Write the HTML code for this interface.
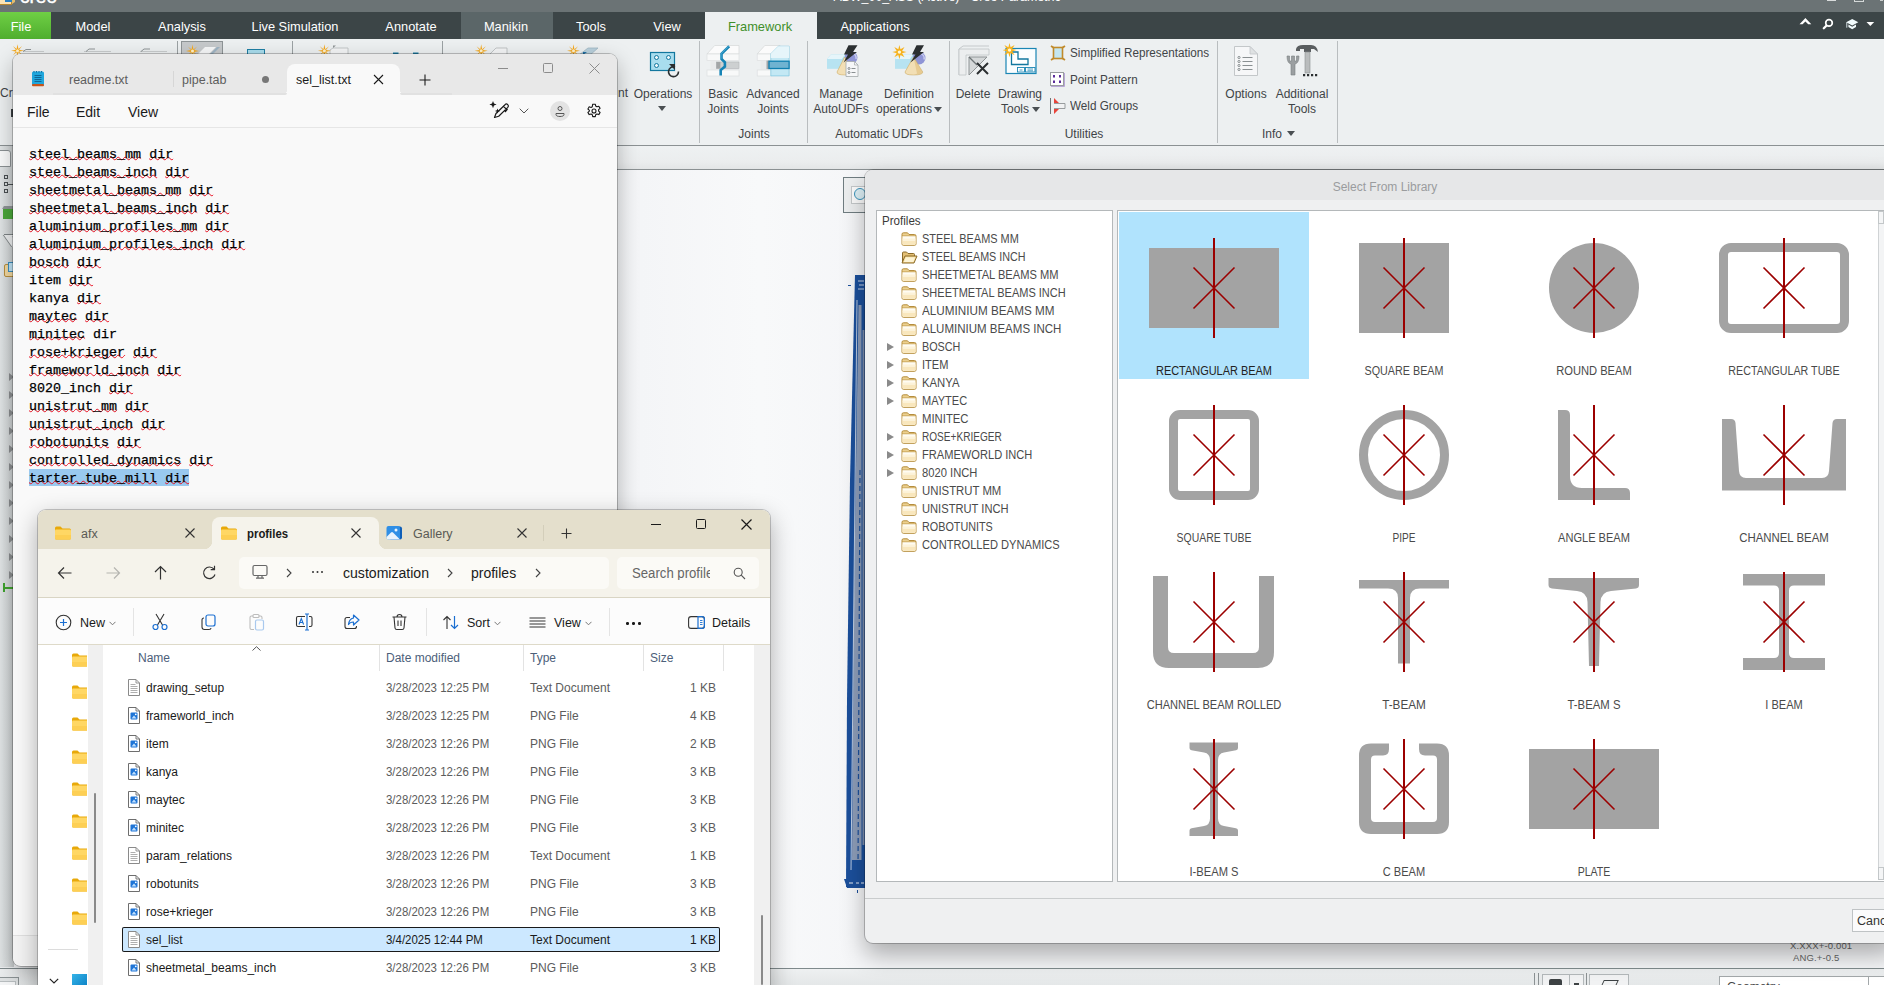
<!DOCTYPE html>
<html lang="en"><head><meta charset="utf-8"><title>Creo Parametric</title>
<style>
*{box-sizing:border-box}
html,body{margin:0;padding:0;width:1884px;height:985px;overflow:hidden;background:#f6f7f8;font-family:"Liberation Sans",sans-serif;}
.abs{position:absolute}
.t{position:absolute;white-space:nowrap;line-height:1}
.c{transform:translateX(-50%)}
/* ---------- CREO ---------- */
#creo{position:absolute;left:0;top:0;width:1884px;height:985px;overflow:hidden;background:#f7f8f9}
#ctitle{position:absolute;left:0;top:0;width:1884px;height:12px;background:#6b7375}
#cmenu{position:absolute;left:0;top:12px;width:1884px;height:27px;background:#3c4547}
#cmenu .t{color:#fff;font-size:13.5px;top:7.500px}
#cmenu .t.c{transform:translateX(-50%) scaleX(.95)}
#cribbon{position:absolute;left:0;top:39px;width:1884px;height:106px;background:#edf0f1}
#cribbon .t{color:#3f4447;font-size:12px}
#cribbon .sep{position:absolute;top:2px;width:1px;height:102px;background:#b9bdbf}
#cstrip{position:absolute;left:0;top:145px;width:1884px;height:24px;background:linear-gradient(#eef1f2,#ebedee 70%,#e3e5e6);border-top:1px solid #8b9193;}
#cgfx{position:absolute;left:0;top:169px;width:1884px;height:799px;background:linear-gradient(90deg,#eef0f2 600px,#f4f5f7 640px,#f8f9fa 760px,#f5f6f8 860px);border-top:1px solid #8b9193}
#cstatus{position:absolute;left:0;top:968px;width:1884px;height:17px;background:linear-gradient(#eef0f1,#e4e7e8);border-top:1px solid #7f8a8c;overflow:hidden}
/* ---------- NOTEPAD ---------- */
#notepad{position:absolute;left:13px;top:54px;width:604px;height:912px;background:#f9f9f9;border-radius:8px;box-shadow:0 0 0 1px rgba(0,0,0,.22),0 8px 22px rgba(0,0,0,.28);overflow:hidden}
#ntitle{position:absolute;left:0;top:0;width:604px;height:41px;background:#e8e8e8}
#nmenu{position:absolute;left:0;top:41px;width:604px;height:33px;background:#f9f9f9;border-bottom:1px solid #e6e6e6}
#nmenu .t{font-size:14px;color:#1a1a1a}
#ntext{z-index:0;position:absolute;left:0;top:74px;width:604px;height:800px;padding:18px 0 0 16px;font-family:"Liberation Mono",monospace;font-size:13.35px;color:#000;-webkit-text-stroke:.25px #000;}
#ntext .ln{height:18px;line-height:18px;white-space:pre}
#ntext u{text-decoration:underline wavy #e81123;text-decoration-thickness:1.2px;text-underline-offset:-1.5px;text-decoration-skip-ink:none}
#ntext .sel{position:relative;display:inline-block;height:18px}
#ntext .sel::before{content:"";position:absolute;left:0;right:0;top:-1.5px;height:17px;background:#99c9ef;z-index:-1}
#nstatus{position:absolute;left:0;top:881px;width:604px;height:30px;background:#f3f3f3;border-top:1px solid #e0e0e0}
/* ---------- DIALOG ---------- */
#dialog{position:absolute;left:865px;top:170px;width:1030px;height:773px;background:#eff0f1;border-radius:8px 0 0 8px;box-shadow:0 0 0 1px rgba(0,0,0,.22),0 12px 24px rgba(0,0,0,.30);overflow:hidden}
#dtitle{position:absolute;left:0;top:0;width:1030px;height:30px;background:#e6e7e8}
#dtree{position:absolute;left:11px;top:40px;width:237px;height:672px;background:#fff;border:1px solid #b4b8ba}
#dgrid{position:absolute;left:252px;top:40px;width:768px;height:672px;background:#fff;border:1px solid #b4b8ba;overflow:hidden}
.tr{position:absolute;left:0;height:18px;width:236px;font-size:12px;color:#4a4a4a;margin-top:.5px;line-height:18px;white-space:nowrap}
.tr span{position:absolute;left:45px;top:0;transform:scaleX(.918);transform-origin:0 50%}
.tr .fi{position:absolute;left:24px;top:2px}
.tr .ar{position:absolute;left:10px;top:5.500px;border:4.500px solid transparent;border-left:7px solid #8a8a8a;border-right:0}
.cell{position:absolute;width:190px;height:167px}
.cell.sel{background:#b0e3fd}
.cell svg{position:absolute;left:0;top:0}
.cell .lb{position:absolute;left:0;top:153px;width:190px;text-align:center;font-size:12px;line-height:12px;color:#4a4a4a;white-space:nowrap;transform:scaleX(.912)}
.cell.sel .lb{color:#222}
/* ---------- EXPLORER ---------- */
#explorer{position:absolute;left:38px;top:510px;width:732px;height:490px;background:#fff;border-radius:8px 8px 0 0;box-shadow:0 0 0 1px rgba(0,0,0,.2),0 8px 24px rgba(0,0,0,.32);overflow:hidden}
#etabs{position:absolute;left:0;top:0;width:732px;height:39px;background:#e4dfcc}
#eaddr{position:absolute;left:0;top:39px;width:732px;height:49px;background:#f5f3eb;border-bottom:1px solid #d9d5c4}
#etool{position:absolute;left:0;top:88px;width:732px;height:47px;background:#fcfcfc;border-bottom:1px solid #dedac9}
#ebody{position:absolute;left:0;top:135px;width:732px;height:355px;background:#fff}
#enav{position:absolute;left:0;top:0;width:65px;height:355px;background:#fff}
#ehead{position:absolute;left:84px;top:0;width:640px;height:26px}
#ehead .t{font-size:12px;color:#4c607a}
#ehead i{position:absolute;top:0;width:1px;height:26px;background:#e3e3e3}
.fr{position:absolute;left:84px;width:598px;height:28px;font-size:12px;color:#1a1a1a;white-space:nowrap;line-height:28px}
.fr.sel{background:#cce8ff;box-shadow:inset 0 0 0 1px #1a1a1a;border-radius:2px;margin-top:1.5px;height:25px;line-height:26.5px}
.fr.sel .ic{top:3.5px}
.fr .ic{position:absolute;left:5px;top:5px}

.fr span{position:absolute;top:0}
.fr .n{left:24px}.fr .d{left:264px;color:#5c5c5c;transform:scaleX(.955);transform-origin:0 50%}.fr .ty{left:408px;color:#5c5c5c}.fr .sz{right:4px;color:#5c5c5c}
.fr.sel span{color:#1a1a1a}
</style></head><body>
<div id="creo">
 <div id="ctitle">
  <div class="t" style="left:20px;top:-13.500px;font-size:19px;color:#fff;-webkit-text-stroke:.4px #fff">creo</div>
  <div class="abs" style="left:0;top:0;width:12px;height:5px;background:#fbe4b4;border:1px solid #b8862e;border-top:0;border-left:0"></div><div class="abs" style="left:12px;top:0;width:3px;height:4px;background:#e3bd6e;transform:skewY(-35deg);transform-origin:0 100%"></div><div class="abs" style="left:5px;top:0;width:7px;height:1.500px;background:#2a7fc0"></div>
  <div class="t c" style="left:947px;top:-8.600px;font-size:12.400px;color:#fff">ABW_00_ASS (Active) - Creo Parametric</div>
  <div class="abs" style="left:1827px;top:0;width:9px;height:1px;background:#d9dcdc"></div>
  <div class="abs" style="left:1854px;top:-6px;width:10px;height:8px;border:1px solid #d4d8d8"></div><div class="abs" style="left:1880px;top:0;width:3px;height:1px;background:#c9cdcd"></div>
 </div>
 <div id="cmenu">
  <div class="abs" style="left:0;top:0;width:51px;height:27px;background:linear-gradient(180deg,#6fcf45,#4fae2e)"></div>
  <div class="abs" style="left:461px;top:0;width:92px;height:27px;background:#5b6668"></div>
  <div class="abs" style="left:705px;top:0;width:112px;height:27px;background:#edf0f1"></div>
  <div class="t c" style="left:21px">File</div>
  <div class="t c" style="left:93px">Model</div>
  <div class="t c" style="left:182px">Analysis</div>
  <div class="t c" style="left:295px">Live Simulation</div>
  <div class="t c" style="left:411px">Annotate</div>
  <div class="t c" style="left:506px">Manikin</div>
  <div class="t c" style="left:591px">Tools</div>
  <div class="t c" style="left:667px">View</div>
  <div class="t c" style="left:760px;color:#3f8f2a">Framework</div>
  <div class="t c" style="left:875px">Applications</div>
  <svg class="abs" style="left:1798px;top:4px" width="80" height="20" viewBox="0 0 80 20">
   <path d="M1.500 8.300 L7.400 2.100 L13.300 8.300 H10.200 L7.400 5.500 L4.600 8.300Z" fill="#fff"/>
   <circle cx="31" cy="6.900" r="3.300" fill="none" stroke="#fff" stroke-width="1.700"/><path d="M28.300 9.700 L25.800 12.200" stroke="#fff" stroke-width="2.300" stroke-linecap="round"/>
   <g transform="translate(-2 0)"><path d="M50.200 6.300 L56.200 3.100 L62.300 6.300 L56.200 9.500Z M52.400 8.500 V11.100 L56.200 13.300 L60 11.100 V8.500 L56.200 10.800Z" fill="#f2fbfd"/><path d="M50.800 6.300 V11.700" stroke="#e6f3f6" stroke-width=".9"/></g>
   <path d="M68.500 6 H76.200 L72.350 10.100Z" fill="#fff"/>
  </svg>
 </div>
 <div id="cribbon">
  <!-- icons peeking above notepad -->
  <svg class="abs" style="left:0;top:0" width="640" height="16" viewBox="0 0 640 16">
   <g stroke="#c9cccd" stroke-width="1" fill="none"><path d="M23 12.500H44M84 12.500H111M140 12.500H167"/><path d="M23 12.500l3 -2h5M86 12.500l3 -2.500h6M141 12.500l3 -2.500h6" stroke="#8e9496"/></g>
   <g stroke="#9ba1a3" stroke-width="1" fill="none"><path d="M177.500 2v14M292.500 2v14M442.500 2v14"/></g>
   <rect x="181.500" y="2.500" width="41" height="14" fill="#c6c9cb" stroke="#8e9496"/><path d="M197 16 L205 8 H216 L208 16Z" fill="#f6f7f8"/><path d="M209 16 L217 8 H220 L212 16Z" fill="#9eb4c4"/>
   <rect x="247.500" y="10.500" width="17" height="8" fill="#a9ddee" stroke="#1f7fa5"/>
   <path d="M330 15.500 V11 l3 -2 h15 v6.500" fill="#f4f5f6" stroke="#b9bdbf" stroke-width=".8"/><path d="M333 9 l3 -2.500 h-3z" fill="#8e9496"/>
   <path d="M393 13.500h5.500v3h-5.500zM413 13.500h5.500v3h-5.500z" fill="#1f7fa5"/>
   <path d="M489 16 l7 -7 h11 v7z" fill="#f4f5f6" stroke="#b5b9bb" stroke-width=".8"/>
   <path d="M579 16 l9 -7 h10 l-8 7z" fill="#b9d0dc" stroke="#9fb7c4" stroke-width=".8"/><path d="M583 16 l4 -3 h-4z" fill="#1f6fa5"/>
   <g transform="translate(17.5 11.7)"><path d="M0 -6.5 L.9 -1.6 L4.6 -4.6 L1.6 -.9 L6.5 0 L1.6 .9 L4.6 4.6 L.9 1.6 L0 6.5 L-.9 1.6 L-4.6 4.6 L-1.6 .9 L-6.5 0 L-1.6 -.9 L-4.6 -4.6 L-.9 -1.6Z" fill="#f5a81c"/><circle r="1.500" fill="#fff3cf"/></g><g transform="translate(192.5 12)"><path d="M0 -6.5 L.9 -1.6 L4.6 -4.6 L1.6 -.9 L6.5 0 L1.6 .9 L4.6 4.6 L.9 1.6 L0 6.5 L-.9 1.6 L-4.6 4.6 L-1.6 .9 L-6.5 0 L-1.6 -.9 L-4.6 -4.6 L-.9 -1.6Z" fill="#f5a81c"/><circle r="1.500" fill="#fff3cf"/></g><g transform="translate(324.4 11.8)"><path d="M0 -6.5 L.9 -1.6 L4.6 -4.6 L1.6 -.9 L6.5 0 L1.6 .9 L4.6 4.6 L.9 1.6 L0 6.5 L-.9 1.6 L-4.6 4.6 L-1.6 .9 L-6.5 0 L-1.6 -.9 L-4.6 -4.6 L-.9 -1.6Z" fill="#f5a81c"/><circle r="1.500" fill="#fff3cf"/></g><g transform="translate(481.2 11.8)"><path d="M0 -6.5 L.9 -1.6 L4.6 -4.6 L1.6 -.9 L6.5 0 L1.6 .9 L4.6 4.6 L.9 1.6 L0 6.5 L-.9 1.6 L-4.6 4.6 L-1.6 .9 L-6.5 0 L-1.6 -.9 L-4.6 -4.6 L-.9 -1.6Z" fill="#f5a81c"/><circle r="1.500" fill="#fff3cf"/></g><g transform="translate(573.5 11.8)"><path d="M0 -6.5 L.9 -1.6 L4.6 -4.6 L1.6 -.9 L6.5 0 L1.6 .9 L4.6 4.6 L.9 1.6 L0 6.5 L-.9 1.6 L-4.6 4.6 L-1.6 .9 L-6.5 0 L-1.6 -.9 L-4.6 -4.6 L-.9 -1.6Z" fill="#f5a81c"/><circle r="1.500" fill="#fff3cf"/></g>
  </svg>
  <div class="t" style="left:0;top:48px">Cr</div>
  <div class="abs" style="left:11px;top:70px;width:2px;height:8px;background:#3a3f42"></div>
  <div class="t" style="left:618px;top:48px">nt</div>
  <div class="sep" style="left:699px"></div><div class="sep" style="left:807px"></div><div class="sep" style="left:949px"></div><div class="sep" style="left:1217px"></div><div class="sep" style="left:1337px"></div>
  <!-- Operations -->
  <svg class="abs" style="left:648px;top:11px" width="34" height="30" viewBox="0 0 34 30">
   <rect x="2.500" y="2.500" width="24" height="18" fill="#a9ddee" stroke="#12779e" stroke-width="1.200"/>
   <g fill="#eef7fa" stroke="#12779e"><circle cx="8.500" cy="7.500" r="2"/><circle cx="20.500" cy="7.500" r="2"/><circle cx="8.500" cy="15.500" r="2"/></g>
   <path d="M21 14h6v6z" fill="#2a2f31"/><path d="M30.500 21.500a5 5 0 1 1 -3.500 -4.600" fill="none" stroke="#2a2f31" stroke-width="1.600"/>
  </svg>
  <div class="t c" style="left:663px;top:49px">Operations</div>
  <div class="abs" style="left:658px;top:67px;border:4px solid transparent;border-top:5px solid #4a4f52;border-bottom:0"></div>
  <!-- Joints -->
  <svg class="abs" style="left:706px;top:5px" width="36" height="34" viewBox="0 0 36 34">
   <path d="M1 10 L8.700 1.500 H33 V10Z" fill="#fbfbfb" stroke="#d5d8d9" stroke-width=".7"/>
   <rect x="1" y="10" width="32" height="6.600" fill="#f8f9f9" stroke="#dcdfe0" stroke-width=".7"/>
   <rect x="4.500" y="16.600" width="28.500" height="9.400" fill="#e9ebec"/>
   <rect x="10.400" y="18" width="22.600" height="6.500" fill="#cdd0d1" stroke="#b1b5b7" stroke-width=".6"/><rect x="10.400" y="18" width="4" height="6.500" fill="#a3a6a7"/>
   <rect x="1" y="26" width="32" height="6" fill="#f8f9f9" stroke="#dcdfe0" stroke-width=".7"/>
   <path d="M23.200 2.200 L15.500 9.800 V14.900 L18.900 18.300 V22.600 L14.700 26 V31.600" fill="none" stroke="#1583b5" stroke-width="2.600" stroke-linejoin="miter"/>
   <path d="M22.600 2.200 L15 9.800 V14.900" fill="none" stroke="#5bb8dd" stroke-width=".8"/>
  </svg>
  <svg class="abs" style="left:756px;top:5px" width="36" height="34" viewBox="0 0 36 34">
   <path d="M1.200 10 L8.800 1.500 H24 V10Z" fill="#fbfbfb" stroke="#d5d8d9" stroke-width=".7"/>
   <rect x="1.200" y="10" width="14" height="6.600" fill="#f8f9f9" stroke="#dcdfe0" stroke-width=".7"/>
   <rect x="4.500" y="16.600" width="11" height="9.400" fill="#e9ebec"/>
   <rect x="1.200" y="26" width="14" height="6" fill="#f8f9f9" stroke="#dcdfe0" stroke-width=".7"/>
   <path d="M22.400 2.200 H33.100 V31.900 H14.800 V9.800Z" fill="#c3e8f4" stroke="#7cc4de" stroke-width=".7"/><path d="M22.400 2.200 H33.100 V14 H14.800 V9.800Z" fill="#e6f5fa"/>
   <rect x="10.500" y="16.600" width="3" height="8.500" fill="#a3a6a7"/>
   <rect x="13" y="17.200" width="20.100" height="7.300" fill="#6fb3d1" stroke="#0f7fb0" stroke-width="1.300"/>
  </svg>
  <div class="t c" style="left:723px;top:49px">Basic</div><div class="t c" style="left:723px;top:63.700px">Joints</div>
  <div class="t c" style="left:773px;top:49px">Advanced</div><div class="t c" style="left:773px;top:63.700px">Joints</div>
  <div class="t c" style="left:754px;top:89px">Joints</div>
  <!-- Automatic UDFs -->
  <svg class="abs" style="left:826px;top:5px" width="34" height="36" viewBox="0 0 34 36">
   <circle cx="25" cy="13.500" r="6.500" fill="#8f95d6"/><path d="M26 9 a5 5 0 0 1 4 6" stroke="#c9ccee" stroke-width="1.500" fill="none"/>
   <path d="M1 15 L5 10.500 H19 V24.500 H1Z" fill="#a9ddee"/><path d="M1 15 L5 10.500 H19 L16 15Z" fill="#e6f5fa"/><path d="M1 15 H16 V24.500 H1Z" fill="#b7e3f1"/>
   <path d="M18.700 13 L26.500 28 Q26.500 31 18.700 31 Q11 31 11 28Z" fill="#e7cb92"/><path d="M18.700 13 L22 29.500 Q20 31 18.700 31 Q11 31 11 28Z" fill="#f2dfb5"/><path d="M18.700 13 L26.500 28 Q26.500 31 18.700 31 Q11 31 11 28Z" fill="none" stroke="#c9a862" stroke-width=".5"/>
   <path d="M22.500 1.300 H31.500 L27 8 H31 L17.500 18.500 L22 10.500 H18Z" fill="#2b2f31"/>
   <path d="M20 17.500 H28.500 L32 21 V32.500 H20Z" fill="#f6f7f8" stroke="#a3a8aa" stroke-width=".8"/><path d="M28.500 17.500 V21 H32" fill="none" stroke="#a3a8aa" stroke-width=".7"/><g stroke="#6f7577" stroke-width=".8" fill="none"><circle cx="23" cy="24.500" r="1"/><circle cx="23" cy="28.500" r="1"/><path d="M25.500 24.500h4M25.500 28.500h4"/></g>
  </svg>
  <svg class="abs" style="left:892px;top:5px" width="34" height="36" viewBox="0 0 34 36">
   <circle cx="27" cy="14" r="6.500" fill="#8f95d6"/><path d="M28.500 9.500 a5 5 0 0 1 3.500 6" stroke="#c9ccee" stroke-width="1.500" fill="none"/>
   <path d="M3 15 L7 10.500 H21 V24.500 H3Z" fill="#a9ddee"/><path d="M3 15 L7 10.500 H21 L18 15Z" fill="#e6f5fa"/><path d="M3 15 H18 V24.500 H3Z" fill="#b7e3f1"/>
   <path d="M21.500 13 L30.800 28 Q30.800 31 21.500 31 Q13 31 13 28Z" fill="#e7cb92"/><path d="M21.500 13 L25 29.500 Q23 31 21.500 31 Q13 31 13 28Z" fill="#f2dfb5"/><path d="M21.500 13 L30.800 28 Q30.800 31 21.500 31 Q13 31 13 28Z" fill="none" stroke="#c9a862" stroke-width=".5"/>
   <path d="M24.500 1.300 H32 L28 8 H32 L18.500 18.500 L23.500 10.500 H20Z" fill="#2b2f31"/>
   <path d="M7.400 1 l1.100 4.300 l4 -2.300 l-2.400 4 l4.400 1.100 l-4.400 1.100 l2.400 4 l-4 -2.300 l-1.100 4.300 l-1.100 -4.300 l-4 2.300 l2.400 -4 l-4.400 -1.100 l4.400 -1.100 l-2.400 -4 l4 2.300z" fill="#f6b21e"/><circle cx="7.400" cy="8.100" r="1.700" fill="#fff7d6"/>
  </svg>
  <div class="t c" style="left:841px;top:49px">Manage</div><div class="t c" style="left:841px;top:63.700px">AutoUDFs</div>
  <div class="t c" style="left:909px;top:49px">Definition</div><div class="t c" style="left:904px;top:63.700px">operations</div>
  <div class="abs" style="left:934px;top:68px;border:4px solid transparent;border-top:5px solid #4a4f52;border-bottom:0"></div>
  <div class="t c" style="left:879px;top:89px">Automatic UDFs</div>
  <!-- Utilities -->
  <svg class="abs" style="left:957px;top:6px" width="34" height="34" viewBox="0 0 34 34">
   <path d="M2 30 V4 L6 1 H32" fill="none" stroke="#c5c9cb"/><path d="M2 4 H32 V10 H9 V30 H2Z" fill="#eceeef" stroke="#c0c4c6" stroke-width=".8"/>
   <path d="M12 12 H30 L12 30Z" fill="#d5d8d9" stroke="#8e9395" stroke-width="1"/><path d="M12 12 L20 20" stroke="#6f7577" stroke-width="1.200"/>
   <path d="M20 18 L31 29 M31 18 L20 29" stroke="#2b2f31" stroke-width="2"/>
  </svg>
  <svg class="abs" style="left:1003px;top:4px" width="36" height="36" viewBox="0 0 36 36">
   <rect x="3" y="5.500" width="30" height="25" fill="#fafdfe" stroke="#1a86b4" stroke-width="1.200"/>
   <path d="M8.500 9 V21.500 H25 V16 H15 V9Z" fill="#fff" stroke="#12779e" stroke-width="1.300"/>
   <rect x="14.500" y="24.500" width="7" height="4.500" fill="#fff" stroke="#1a86b4" stroke-width=".9"/><rect x="22.500" y="24.500" width="9.500" height="4.500" fill="#fff" stroke="#1a86b4" stroke-width=".9"/><path d="M16.500 27h3M24.500 26h5.500M24.500 27.800h5.500" stroke="#1a86b4" stroke-width=".8"/>
   <path d="M6.500 0 l1.100 4.300 l4 -2.300 l-2.400 4 l4.400 1.100 l-4.400 1.100 l2.400 4 l-4 -2.300 l-1.100 4.300 l-1.100 -4.300 l-4 2.300 l2.400 -4 l-4.400 -1.100 l4.400 -1.100 l-2.400 -4 l4 2.300z" fill="#f6b21e"/><circle cx="6.500" cy="7.100" r="1.700" fill="#fff7d6"/>
  </svg>
  <div class="t c" style="left:973px;top:49px">Delete</div>
  <div class="t c" style="left:1020px;top:49px">Drawing</div><div class="t c" style="left:1015px;top:63.700px">Tools</div>
  <div class="abs" style="left:1032px;top:68px;border:4px solid transparent;border-top:5px solid #4a4f52;border-bottom:0"></div>
  <svg class="abs" style="left:1050px;top:6px" width="16" height="16" viewBox="0 0 16 16"><rect x="3.500" y="2.500" width="9" height="11" fill="#c4e6f0" stroke="#c08a2a" stroke-width="1.600"/><path d="M1 1l3 2M15 1l-3 2M1 15l3 -2M15 15l-3 -2" stroke="#c08a2a" stroke-width="1.800"/></svg>
  <svg class="abs" style="left:1049px;top:32px" width="17" height="17" viewBox="0 0 17 17"><rect x="1.500" y="1.500" width="13" height="13" fill="#fff" stroke="#9a9ea0"/><path d="M15.500 2V15.500H2" stroke="#b9a7d8" fill="none"/><g fill="#5b2d9b"><rect x="4" y="4" width="2" height="2.500"/><rect x="10" y="4" width="2" height="2.500"/><rect x="4" y="9.500" width="2" height="2.500"/><rect x="10" y="9.500" width="2" height="2.500"/></g></svg>
  <svg class="abs" style="left:1049px;top:58px" width="18" height="18" viewBox="0 0 18 18"><path d="M1.500 1v16" stroke="#6f7577"/><path d="M5 1 L10 6 H5Z M5 17 L10 12 H5Z" fill="#e8443a"/><path d="M5 6.500H16V11.500H5" fill="#f1f2f3" stroke="#8e9395" stroke-width=".9"/></svg>
  <div class="t" style="left:1070px;top:8px;transform:scaleX(.975);transform-origin:0 50%">Simplified Representations</div>
  <div class="t" style="left:1070px;top:35px;transform:scaleX(.975);transform-origin:0 50%">Point Pattern</div>
  <div class="t" style="left:1070px;top:61px;transform:scaleX(.975);transform-origin:0 50%">Weld Groups</div>
  <div class="t c" style="left:1084px;top:89px">Utilities</div>
  <!-- Info -->
  <svg class="abs" style="left:1232px;top:6px" width="28" height="32" viewBox="0 0 28 32"><path d="M2.500 1.500 H18 L25.500 9 V30.500 H2.500Z" fill="#f6f7f8" stroke="#c3c7c9"/><path d="M18 1.500 V9 H25.500Z" fill="#dfe2e3" stroke="#c3c7c9" stroke-width=".8"/><g stroke="#8a9092" stroke-width="1" fill="none"><circle cx="7" cy="12.500" r="1.100"/><circle cx="7" cy="16.500" r="1.100"/><circle cx="7" cy="20.500" r="1.100"/><circle cx="7" cy="24.500" r="1.100"/><path d="M10.500 12.500h10M10.500 16.500h10M10.500 20.500h10M10.500 24.500h10"/></g></svg>
  <svg class="abs" style="left:1284px;top:4px" width="36" height="36" viewBox="0 0 36 36">
   <path d="M3 13 q0 7 4 8 V32 h4 V21 q4 -1 4 -8 h-2.500 v5 h-2 v-5 h-3 v5 h-2 v-5Z" fill="#9b9fa1" stroke="#7b8082" stroke-width=".6"/>
   <path d="M12 6 Q13 2 19 2 H27 Q33 2 34 9 L30 6 H27 V9 H20 V6 H16 V8 H12Z" fill="#5a5e60"/><rect x="21" y="9" width="5" height="21" fill="#b9bcbd" stroke="#8b8f91" stroke-width=".6"/>
   <path d="M19 31h2.200v2.200h-2.200zM23 31h2.200v2.200h-2.200zM27 31h2.200v2.200h-2.200zM31 31h2.200v2.200h-2.200z" fill="#2b2f31"/>
  </svg>
  <div class="t c" style="left:1246px;top:49px">Options</div>
  <div class="t c" style="left:1302px;top:49px">Additional</div><div class="t c" style="left:1302px;top:63.700px">Tools</div>
  <div class="t c" style="left:1272px;top:89px">Info</div>
  <div class="abs" style="left:1287px;top:92px;border:4px solid transparent;border-top:5px solid #4a4f52;border-bottom:0"></div>
 </div>
 <div id="cstrip"></div>
 <div id="cgfx">
  <div class="abs" style="left:843px;top:7px;width:40px;height:36px;border:1px solid #6f7c80;background:#eceeef"></div>
  <div class="abs" style="left:851px;top:16px;width:20px;height:18px;border:1px solid #c3c7c9;background:#fbfbfb"></div>
  <div class="abs" style="left:854px;top:18px;width:12px;height:12px;border:1.300px solid #3a93ba;border-radius:50%;background:#dceff5"></div>
  <!-- model -->
  <svg class="abs" style="left:840px;top:100px" width="26" height="630" viewBox="840 270 26 630">
   <path d="M855 275 H866 V887 H846 L847 700 L850 480Z" fill="#1b4f9b"/>
   <path d="M858.500 305 H861.500 L861.500 860 H852 L854 600Z" fill="#8d9db8"/>
   <path d="M862.500 330 H864.500 V845 H862.500Z" fill="#7f90ad"/>
   <path d="M857 300 L851 870" stroke="#e9edf4" stroke-width=".8" fill="none"/>
   <path d="M860 470 L858 870" stroke="#1b4f9b" stroke-width="1.200" stroke-dasharray="5 3" fill="none"/>
   <path d="M856 278 H866 V293 H856Z" fill="#1b4f9b"/><path d="M858 281h6M859 285h5M858 289h6" stroke="#c9d3e4" stroke-width="1"/>
   <path d="M844 879 H866 V888 H847Z" fill="#1b4f9b"/><path d="M849 883h4M856 883h3M861 883h3" stroke="#e9edf4" stroke-width="1"/>
   <path d="M848 285.500h3" stroke="#1b4f9b" stroke-width="1"/><path d="M857.500 890v3" stroke="#1b4f9b" stroke-width="1"/>
  </svg>
  <div class="t" style="left:1790px;top:771px;font-size:9.500px;color:#666;letter-spacing:.15px">X.XXX+-0.001</div>
  <div class="t" style="left:1793px;top:783px;font-size:9.500px;color:#666;letter-spacing:.15px">ANG.+-0.5</div>
 </div>
 <div id="cstatus">
  <div class="abs" style="left:-2px;top:8px;width:21px;height:12px;border:1px solid #8d9496;background:#dfe2e3"></div><div class="abs" style="left:-2px;top:12px;width:18px;height:8px;border:1px solid #b9bec0;background:#f4f5f6"></div>
  <div class="abs" style="left:1534px;top:4px;width:1px;height:15px;background:#8b9193"></div><div class="abs" style="left:1538px;top:4px;width:1px;height:15px;background:#8b9193"></div>
  <div class="abs" style="left:1542px;top:5px;width:42px;height:14px;border:1px solid #b3b8ba;background:#f1f2f3"></div>
  <div class="abs" style="left:1569px;top:5px;width:1px;height:14px;background:#b3b8ba"></div>
  <div class="abs" style="left:1549px;top:10px;width:13px;height:8px;background:#3d4244;border-radius:2px 2px 0 0"></div>
  <div class="abs" style="left:1574px;top:14px;width:5px;height:1.500px;background:#3d4244"></div>
  <div class="abs" style="left:1586px;top:4px;width:1px;height:15px;background:#8b9193"></div>
  <div class="abs" style="left:1589px;top:5px;width:40px;height:14px;border:1px solid #b3b8ba;background:#f1f2f3"></div>
  <div class="abs" style="left:1602px;top:11px;width:15px;height:8px;border:1.500px solid #3d4244;transform:skewX(-25deg)"></div>
  <div class="abs" style="left:1719px;top:7px;width:170px;height:13px;border:1px solid #a3a8aa;background:#fff"></div>
  <div class="t" style="left:1727px;top:12px;font-size:12px;color:#444">Geometry</div>
  <div class="abs" style="left:1868px;top:7px;width:1px;height:13px;background:#a3a8aa"></div>
 </div>
 <!-- left edge of creo visible left of notepad -->
 <div class="abs" style="left:0;top:146px;width:14px;height:821px;background:linear-gradient(90deg,#e1e5e6,#d6dadb 55%,#c3c7c8);overflow:hidden">
  <div class="abs" style="left:-4px;top:4px;width:15px;height:17px;background:#fafbfb;border:1px solid #8b9193;border-radius:0 3px 0 0"></div>
  <div class="abs" style="left:4px;top:29px;width:4px;height:4px;border:1px solid #4a4f52"></div><div class="abs" style="left:4px;top:36px;width:4px;height:4px;border:1px solid #4a4f52"></div><div class="abs" style="left:4px;top:43px;width:4px;height:4px;border:1px solid #4a4f52"></div><div class="abs" style="left:8px;top:38px;width:5px;height:1px;background:#4a4f52"></div>
  <div class="abs" style="left:3px;top:60px;width:11px;height:3px;background:#8e9395;transform:skewX(-30deg)"></div><div class="abs" style="left:3px;top:63px;width:11px;height:10px;background:#4aa63a"></div>
  <div class="abs" style="left:4px;top:88px;width:12px;height:1px;background:#7d8385;box-shadow:0 1px #f3f4f5"></div><div class="abs" style="left:7px;top:89px;width:8px;height:12px;border-left:1px solid #7d8385;transform:skewX(35deg);background:#eceeef"></div>
  <div class="abs" style="left:4px;top:118px;width:12px;height:13px;background:#f3d9a0;border:1px solid #b78f3e;border-radius:2px"></div><div class="abs" style="left:8px;top:116px;width:8px;height:10px;background:#bfe3f5;border:1px solid #3a8fc0"></div>
  <div class="abs" style="left:9px;top:227px;border:4.500px solid transparent;border-left:5px solid #8a8d8f;border-right:0"></div><div class="abs" style="left:9px;top:245px;border:4.500px solid transparent;border-left:5px solid #8a8d8f;border-right:0"></div><div class="abs" style="left:9px;top:263px;border:4.500px solid transparent;border-left:5px solid #8a8d8f;border-right:0"></div><div class="abs" style="left:9px;top:281px;border:4.500px solid transparent;border-left:5px solid #8a8d8f;border-right:0"></div><div class="abs" style="left:9px;top:299px;border:4.500px solid transparent;border-left:5px solid #8a8d8f;border-right:0"></div><div class="abs" style="left:9px;top:317px;border:4.500px solid transparent;border-left:5px solid #8a8d8f;border-right:0"></div><div class="abs" style="left:9px;top:335px;border:4.500px solid transparent;border-left:5px solid #8a8d8f;border-right:0"></div><div class="abs" style="left:9px;top:353px;border:4.500px solid transparent;border-left:5px solid #8a8d8f;border-right:0"></div><div class="abs" style="left:9px;top:371px;border:4.500px solid transparent;border-left:5px solid #8a8d8f;border-right:0"></div><div class="abs" style="left:9px;top:389px;border:4.500px solid transparent;border-left:5px solid #8a8d8f;border-right:0"></div><div class="abs" style="left:9px;top:407px;border:4.500px solid transparent;border-left:5px solid #8a8d8f;border-right:0"></div><div class="abs" style="left:9px;top:425px;border:4.500px solid transparent;border-left:5px solid #8a8d8f;border-right:0"></div>
  <div class="abs" style="left:3px;top:441px;width:11px;height:1.500px;background:#3fa32e"></div><div class="abs" style="left:3px;top:437px;width:1.500px;height:9px;background:#3fa32e"></div>
 </div>
</div>
<div id="notepad">
 <div id="ntitle">
  <svg class="abs" style="left:18px;top:16px" width="14" height="17" viewBox="0 0 14 17"><rect x="1" y="1.500" width="12" height="14" rx="1.500" fill="#1fa6dc"/><rect x="1" y="14" width="12" height="2.200" rx="1" fill="#c7541a"/><path d="M3 1v1.500M5.500 1v1.500M8 1v1.500M10.500 1v1.500" stroke="#0c6fa3" stroke-width="1"/><path d="M3.500 5.500h7M3.500 7.500h7M3.500 9.500h7M3.500 11.500h7" stroke="#0d5d8c" stroke-width=".9"/></svg>
  <div class="t" style="left:56px;top:20px;font-size:12.500px;color:#5d5d5d">readme.txt</div>
  <div class="abs" style="left:160px;top:17px;width:1px;height:16px;background:#d6d6d6"></div>
  <div class="t" style="left:169px;top:20px;font-size:12.500px;color:#5d5d5d">pipe.tab</div>
  <div class="abs" style="left:249px;top:22px;width:7px;height:7px;border-radius:50%;background:#777"></div>
  <div class="abs" style="left:274px;top:10px;width:113px;height:31px;background:#f9f9f9;border-radius:8px 8px 0 0"></div>
  <div class="abs" style="left:268px;top:35px;width:6px;height:6px;background:radial-gradient(circle at 0 0,transparent 6px,#f9f9f9 6.500px)"></div>
  <div class="abs" style="left:387px;top:35px;width:6px;height:6px;background:radial-gradient(circle at 100% 0,transparent 6px,#f9f9f9 6.500px)"></div>
  <div class="abs" style="left:40px;top:39px;width:234px;height:2px;background:#e1e1e1;border-radius:0 0 6px 0"></div>
  <div class="abs" style="left:387px;top:39px;width:52px;height:2px;background:#e1e1e1;border-radius:0 0 0 6px"></div>
  <div class="t" style="left:283px;top:20px;font-size:12.500px;color:#1a1a1a">sel_list.txt</div>
  <svg class="abs" style="left:360px;top:20px" width="11" height="11" viewBox="0 0 11 11"><path d="M1 1L10 10M10 1L1 10" stroke="#1a1a1a" stroke-width="1.100"/></svg>
  <svg class="abs" style="left:406px;top:20px" width="12" height="12" viewBox="0 0 12 12"><path d="M6 .500V11.500M.500 6H11.500" stroke="#1a1a1a" stroke-width="1.100"/></svg>
  <div class="abs" style="left:485px;top:14px;width:10px;height:1px;background:#8c8c8c"></div>
  <div class="abs" style="left:530px;top:9px;width:10px;height:10px;border:1px solid #8c8c8c;border-radius:1.500px"></div>
  <svg class="abs" style="left:576px;top:9px" width="11" height="11" viewBox="0 0 11 11"><path d="M.500 .500L10.500 10.500M10.500 .500L.500 10.500" stroke="#8c8c8c" stroke-width="1"/></svg>
 </div>
 <div id="nmenu">
  <div class="t" style="left:14px;top:10px">File</div><div class="t" style="left:63px;top:10px">Edit</div><div class="t" style="left:115px;top:10px">View</div>
  <svg class="abs" style="left:476px;top:5px" width="24" height="22" viewBox="0 0 24 22"><path d="M4 1 l1 2.600 l2.600 1 l-2.600 1 l-1 2.600 l-1 -2.600 l-2.600 -1 l2.600 -1z" fill="#1a1a1a"/><path d="M8.500 8.500 l.7 1.800 l1.800 .7 l-1.800 .7 l-.7 1.800 l-.7 -1.800 l-1.800 -.7 l1.800 -.7z" fill="#1a1a1a"/><path d="M5.500 17.500 L7 13.500 L16 4.700 a1.900 1.900 0 0 1 2.800 2.700 L9.700 16.200Z M14.500 6.300 l2.700 2.700 M18.500 9 l-2.500 3" fill="none" stroke="#1a1a1a" stroke-width="1.200" stroke-linejoin="round"/></svg>
  <svg class="abs" style="left:506px;top:13px" width="10" height="6" viewBox="0 0 10 6"><path d="M.700 .700L5 5L9.300 .700" fill="none" stroke="#555" stroke-width="1"/></svg>
  <div class="abs" style="left:537px;top:6px;width:20px;height:20px;border-radius:50%;background:#e3e3e3"></div>
  <svg class="abs" style="left:541px;top:10px" width="12" height="12" viewBox="0 0 12 12"><circle cx="6" cy="3.500" r="2" fill="none" stroke="#555" stroke-width="1"/><path d="M2 8.500h8v1c0 1.500 -2 2 -4 2s-4 -.500 -4 -2z" fill="none" stroke="#555" stroke-width="1"/></svg>
  <svg class="abs" style="left:573px;top:8px" width="16" height="16" viewBox="0 0 16 16"><circle cx="8" cy="8" r="2" fill="none" stroke="#1a1a1a" stroke-width="1.100"/><path d="M6.700 1.200h2.600l.4 1.900 1.200.7 1.900-.6 1.300 2.200-1.500 1.300v1.400l1.500 1.300-1.300 2.200-1.900-.6-1.200.7-.4 1.900H6.700l-.4-1.900-1.200-.7-1.900.6-1.300-2.200 1.500-1.300V7.300L1.900 6l1.300-2.200 1.900.6 1.200-.7z" fill="none" stroke="#1a1a1a" stroke-width="1.100" stroke-linejoin="round"/></svg>
 </div>
 <div id="ntext">
   <div class="ln"><span><u>steel_beams_mm</u> <u>dir</u></span></div>
   <div class="ln"><span><u>steel_beams_inch</u> <u>dir</u></span></div>
   <div class="ln"><span><u>sheetmetal_beams_mm</u> <u>dir</u></span></div>
   <div class="ln"><span><u>sheetmetal_beams_inch</u> <u>dir</u></span></div>
   <div class="ln"><span><u>aluminium_profiles_mm</u> <u>dir</u></span></div>
   <div class="ln"><span><u>aluminium_profiles_inch</u> <u>dir</u></span></div>
   <div class="ln"><span><u>bosch</u> <u>dir</u></span></div>
   <div class="ln"><span>item <u>dir</u></span></div>
   <div class="ln"><span>kanya <u>dir</u></span></div>
   <div class="ln"><span><u>maytec</u> <u>dir</u></span></div>
   <div class="ln"><span><u>minitec</u> dir</span></div>
   <div class="ln"><span><u>rose+krieger</u> <u>dir</u></span></div>
   <div class="ln"><span><u>frameworld_inch</u> <u>dir</u></span></div>
   <div class="ln"><span>8020_inch <u>dir</u></span></div>
   <div class="ln"><span><u>unistrut_mm</u> <u>dir</u></span></div>
   <div class="ln"><span><u>unistrut_inch</u> <u>dir</u></span></div>
   <div class="ln"><span><u>robotunits</u> <u>dir</u></span></div>
   <div class="ln"><span><u>controlled_dynamics</u> <u>dir</u></span></div>
   <div class="ln"><span class="sel"><u>tarter_tube_mill</u> <u>dir</u></span></div>
 </div>
 <div id="nstatus"></div>
</div>
<div id="dialog">
 <div id="dtitle"><div class="t c" style="left:520px;top:11px;font-size:12px;color:#9a9c9e">Select From Library</div></div>
 <div id="dtree">
  <div class="t" style="left:5px;top:4px;font-size:12px;color:#3a3a3a;transform:scaleX(.965);transform-origin:0 50%">Profiles</div>
    <div class="tr" style="top:18px"><svg class="fi" width="16" height="14" viewBox="0 0 16 14"><path d="M1 2.200 Q1 .800 2.500 .800 H6.500 L8 2.500 H13.500 Q15 2.500 15 4 V12 Q15 13.300 13.600 13.300 H2.400 Q1 13.300 1 12Z" fill="#ecd08f" stroke="#b58d3d" stroke-width="1"/><path d="M1.500 4 H14.500 V12 Q14.500 12.800 13.600 12.800 H2.400 Q1.500 12.800 1.500 12Z" fill="#fffcf2"/><path d="M1.500 8.500 H14.500 V12 Q14.500 12.800 13.600 12.800 H2.400 Q1.500 12.800 1.500 12Z" fill="#f9e7bd"/><path d="M1.500 6.500 H14.500 V8.500 H1.500Z" fill="#fdf3d9"/><path d="M1 3.800 H15" stroke="#c09a4a" stroke-width=".7"/></svg><span style="transform:scaleX(0.911)">STEEL BEAMS MM</span></div>
  <div class="tr" style="top:36px"><svg class="fi" width="17" height="14" viewBox="0 0 17 14"><path d="M1.500 12.500 V3 Q1.500 2 2.500 2 H5.500 L7 3.500 H12.500 Q13.500 3.500 13.500 4.500 V6" fill="#e3bf74" stroke="#8a6a2a" stroke-width="1"/><path d="M1 13 L4 6 H16 L13 13Z" fill="#f3d68f" stroke="#8a6a2a" stroke-width="1" stroke-linejoin="round"/><path d="M2.800 12 L4.800 7.200 H14.300 L12.300 12Z" fill="#fdf3d3"/></svg><span style="transform:scaleX(0.896)">STEEL BEAMS INCH</span></div>
  <div class="tr" style="top:54px"><svg class="fi" width="16" height="14" viewBox="0 0 16 14"><path d="M1 2.200 Q1 .800 2.500 .800 H6.500 L8 2.500 H13.500 Q15 2.500 15 4 V12 Q15 13.300 13.600 13.300 H2.400 Q1 13.300 1 12Z" fill="#ecd08f" stroke="#b58d3d" stroke-width="1"/><path d="M1.500 4 H14.500 V12 Q14.500 12.800 13.600 12.800 H2.400 Q1.500 12.800 1.500 12Z" fill="#fffcf2"/><path d="M1.500 8.500 H14.500 V12 Q14.500 12.800 13.600 12.800 H2.400 Q1.500 12.800 1.500 12Z" fill="#f9e7bd"/><path d="M1.500 6.500 H14.500 V8.500 H1.500Z" fill="#fdf3d9"/><path d="M1 3.800 H15" stroke="#c09a4a" stroke-width=".7"/></svg><span style="transform:scaleX(0.926)">SHEETMETAL BEAMS MM</span></div>
  <div class="tr" style="top:72px"><svg class="fi" width="16" height="14" viewBox="0 0 16 14"><path d="M1 2.200 Q1 .800 2.500 .800 H6.500 L8 2.500 H13.500 Q15 2.500 15 4 V12 Q15 13.300 13.600 13.300 H2.400 Q1 13.300 1 12Z" fill="#ecd08f" stroke="#b58d3d" stroke-width="1"/><path d="M1.500 4 H14.500 V12 Q14.500 12.800 13.600 12.800 H2.400 Q1.500 12.800 1.500 12Z" fill="#fffcf2"/><path d="M1.500 8.500 H14.500 V12 Q14.500 12.800 13.600 12.800 H2.400 Q1.500 12.800 1.500 12Z" fill="#f9e7bd"/><path d="M1.500 6.500 H14.500 V8.500 H1.500Z" fill="#fdf3d9"/><path d="M1 3.800 H15" stroke="#c09a4a" stroke-width=".7"/></svg><span style="transform:scaleX(0.917)">SHEETMETAL BEAMS INCH</span></div>
  <div class="tr" style="top:90px"><svg class="fi" width="16" height="14" viewBox="0 0 16 14"><path d="M1 2.200 Q1 .800 2.500 .800 H6.500 L8 2.500 H13.500 Q15 2.500 15 4 V12 Q15 13.300 13.600 13.300 H2.400 Q1 13.300 1 12Z" fill="#ecd08f" stroke="#b58d3d" stroke-width="1"/><path d="M1.500 4 H14.500 V12 Q14.500 12.800 13.600 12.800 H2.400 Q1.500 12.800 1.500 12Z" fill="#fffcf2"/><path d="M1.500 8.500 H14.500 V12 Q14.500 12.800 13.600 12.800 H2.400 Q1.500 12.800 1.500 12Z" fill="#f9e7bd"/><path d="M1.500 6.500 H14.500 V8.500 H1.500Z" fill="#fdf3d9"/><path d="M1 3.800 H15" stroke="#c09a4a" stroke-width=".7"/></svg><span style="transform:scaleX(0.975)">ALUMINIUM BEAMS MM</span></div>
  <div class="tr" style="top:108px"><svg class="fi" width="16" height="14" viewBox="0 0 16 14"><path d="M1 2.200 Q1 .800 2.500 .800 H6.500 L8 2.500 H13.500 Q15 2.500 15 4 V12 Q15 13.300 13.600 13.300 H2.400 Q1 13.300 1 12Z" fill="#ecd08f" stroke="#b58d3d" stroke-width="1"/><path d="M1.500 4 H14.500 V12 Q14.500 12.800 13.600 12.800 H2.400 Q1.500 12.800 1.500 12Z" fill="#fffcf2"/><path d="M1.500 8.500 H14.500 V12 Q14.500 12.800 13.600 12.800 H2.400 Q1.500 12.800 1.500 12Z" fill="#f9e7bd"/><path d="M1.500 6.500 H14.500 V8.500 H1.500Z" fill="#fdf3d9"/><path d="M1 3.800 H15" stroke="#c09a4a" stroke-width=".7"/></svg><span style="transform:scaleX(0.959)">ALUMINIUM BEAMS INCH</span></div>
  <div class="tr" style="top:126px"><i class="ar"></i><svg class="fi" width="16" height="14" viewBox="0 0 16 14"><path d="M1 2.200 Q1 .800 2.500 .800 H6.500 L8 2.500 H13.500 Q15 2.500 15 4 V12 Q15 13.300 13.600 13.300 H2.400 Q1 13.300 1 12Z" fill="#ecd08f" stroke="#b58d3d" stroke-width="1"/><path d="M1.500 4 H14.500 V12 Q14.500 12.800 13.600 12.800 H2.400 Q1.500 12.800 1.500 12Z" fill="#fffcf2"/><path d="M1.500 8.500 H14.500 V12 Q14.500 12.800 13.600 12.800 H2.400 Q1.500 12.800 1.500 12Z" fill="#f9e7bd"/><path d="M1.500 6.500 H14.500 V8.500 H1.500Z" fill="#fdf3d9"/><path d="M1 3.800 H15" stroke="#c09a4a" stroke-width=".7"/></svg><span style="transform:scaleX(0.900)">BOSCH</span></div>
  <div class="tr" style="top:144px"><i class="ar"></i><svg class="fi" width="16" height="14" viewBox="0 0 16 14"><path d="M1 2.200 Q1 .800 2.500 .800 H6.500 L8 2.500 H13.500 Q15 2.500 15 4 V12 Q15 13.300 13.600 13.300 H2.400 Q1 13.300 1 12Z" fill="#ecd08f" stroke="#b58d3d" stroke-width="1"/><path d="M1.500 4 H14.500 V12 Q14.500 12.800 13.600 12.800 H2.400 Q1.500 12.800 1.500 12Z" fill="#fffcf2"/><path d="M1.500 8.500 H14.500 V12 Q14.500 12.800 13.600 12.800 H2.400 Q1.500 12.800 1.500 12Z" fill="#f9e7bd"/><path d="M1.500 6.500 H14.500 V8.500 H1.500Z" fill="#fdf3d9"/><path d="M1 3.800 H15" stroke="#c09a4a" stroke-width=".7"/></svg><span style="transform:scaleX(0.921)">ITEM</span></div>
  <div class="tr" style="top:162px"><i class="ar"></i><svg class="fi" width="16" height="14" viewBox="0 0 16 14"><path d="M1 2.200 Q1 .800 2.500 .800 H6.500 L8 2.500 H13.500 Q15 2.500 15 4 V12 Q15 13.300 13.600 13.300 H2.400 Q1 13.300 1 12Z" fill="#ecd08f" stroke="#b58d3d" stroke-width="1"/><path d="M1.500 4 H14.500 V12 Q14.500 12.800 13.600 12.800 H2.400 Q1.500 12.800 1.500 12Z" fill="#fffcf2"/><path d="M1.500 8.500 H14.500 V12 Q14.500 12.800 13.600 12.800 H2.400 Q1.500 12.800 1.500 12Z" fill="#f9e7bd"/><path d="M1.500 6.500 H14.500 V8.500 H1.500Z" fill="#fdf3d9"/><path d="M1 3.800 H15" stroke="#c09a4a" stroke-width=".7"/></svg><span style="transform:scaleX(0.942)">KANYA</span></div>
  <div class="tr" style="top:180px"><i class="ar"></i><svg class="fi" width="16" height="14" viewBox="0 0 16 14"><path d="M1 2.200 Q1 .800 2.500 .800 H6.500 L8 2.500 H13.500 Q15 2.500 15 4 V12 Q15 13.300 13.600 13.300 H2.400 Q1 13.300 1 12Z" fill="#ecd08f" stroke="#b58d3d" stroke-width="1"/><path d="M1.500 4 H14.500 V12 Q14.500 12.800 13.600 12.800 H2.400 Q1.500 12.800 1.500 12Z" fill="#fffcf2"/><path d="M1.500 8.500 H14.500 V12 Q14.500 12.800 13.600 12.800 H2.400 Q1.500 12.800 1.500 12Z" fill="#f9e7bd"/><path d="M1.500 6.500 H14.500 V8.500 H1.500Z" fill="#fdf3d9"/><path d="M1 3.800 H15" stroke="#c09a4a" stroke-width=".7"/></svg><span style="transform:scaleX(0.920)">MAYTEC</span></div>
  <div class="tr" style="top:198px"><svg class="fi" width="16" height="14" viewBox="0 0 16 14"><path d="M1 2.200 Q1 .800 2.500 .800 H6.500 L8 2.500 H13.500 Q15 2.500 15 4 V12 Q15 13.300 13.600 13.300 H2.400 Q1 13.300 1 12Z" fill="#ecd08f" stroke="#b58d3d" stroke-width="1"/><path d="M1.500 4 H14.500 V12 Q14.500 12.800 13.600 12.800 H2.400 Q1.500 12.800 1.500 12Z" fill="#fffcf2"/><path d="M1.500 8.500 H14.500 V12 Q14.500 12.800 13.600 12.800 H2.400 Q1.500 12.800 1.500 12Z" fill="#f9e7bd"/><path d="M1.500 6.500 H14.500 V8.500 H1.500Z" fill="#fdf3d9"/><path d="M1 3.800 H15" stroke="#c09a4a" stroke-width=".7"/></svg><span style="transform:scaleX(0.943)">MINITEC</span></div>
  <div class="tr" style="top:216px"><i class="ar"></i><svg class="fi" width="16" height="14" viewBox="0 0 16 14"><path d="M1 2.200 Q1 .800 2.500 .800 H6.500 L8 2.500 H13.500 Q15 2.500 15 4 V12 Q15 13.300 13.600 13.300 H2.400 Q1 13.300 1 12Z" fill="#ecd08f" stroke="#b58d3d" stroke-width="1"/><path d="M1.500 4 H14.500 V12 Q14.500 12.800 13.600 12.800 H2.400 Q1.500 12.800 1.500 12Z" fill="#fffcf2"/><path d="M1.500 8.500 H14.500 V12 Q14.500 12.800 13.600 12.800 H2.400 Q1.500 12.800 1.500 12Z" fill="#f9e7bd"/><path d="M1.500 6.500 H14.500 V8.500 H1.500Z" fill="#fdf3d9"/><path d="M1 3.800 H15" stroke="#c09a4a" stroke-width=".7"/></svg><span style="transform:scaleX(0.839)">ROSE+KRIEGER</span></div>
  <div class="tr" style="top:234px"><i class="ar"></i><svg class="fi" width="16" height="14" viewBox="0 0 16 14"><path d="M1 2.200 Q1 .800 2.500 .800 H6.500 L8 2.500 H13.500 Q15 2.500 15 4 V12 Q15 13.300 13.600 13.300 H2.400 Q1 13.300 1 12Z" fill="#ecd08f" stroke="#b58d3d" stroke-width="1"/><path d="M1.500 4 H14.500 V12 Q14.500 12.800 13.600 12.800 H2.400 Q1.500 12.800 1.500 12Z" fill="#fffcf2"/><path d="M1.500 8.500 H14.500 V12 Q14.500 12.800 13.600 12.800 H2.400 Q1.500 12.800 1.500 12Z" fill="#f9e7bd"/><path d="M1.500 6.500 H14.500 V8.500 H1.500Z" fill="#fdf3d9"/><path d="M1 3.800 H15" stroke="#c09a4a" stroke-width=".7"/></svg><span style="transform:scaleX(0.925)">FRAMEWORLD INCH</span></div>
  <div class="tr" style="top:252px"><i class="ar"></i><svg class="fi" width="16" height="14" viewBox="0 0 16 14"><path d="M1 2.200 Q1 .800 2.500 .800 H6.500 L8 2.500 H13.500 Q15 2.500 15 4 V12 Q15 13.300 13.600 13.300 H2.400 Q1 13.300 1 12Z" fill="#ecd08f" stroke="#b58d3d" stroke-width="1"/><path d="M1.500 4 H14.500 V12 Q14.500 12.800 13.600 12.800 H2.400 Q1.500 12.800 1.500 12Z" fill="#fffcf2"/><path d="M1.500 8.500 H14.500 V12 Q14.500 12.800 13.600 12.800 H2.400 Q1.500 12.800 1.500 12Z" fill="#f9e7bd"/><path d="M1.500 6.500 H14.500 V8.500 H1.500Z" fill="#fdf3d9"/><path d="M1 3.800 H15" stroke="#c09a4a" stroke-width=".7"/></svg><span style="transform:scaleX(0.933)">8020 INCH</span></div>
  <div class="tr" style="top:270px"><svg class="fi" width="16" height="14" viewBox="0 0 16 14"><path d="M1 2.200 Q1 .800 2.500 .800 H6.500 L8 2.500 H13.500 Q15 2.500 15 4 V12 Q15 13.300 13.600 13.300 H2.400 Q1 13.300 1 12Z" fill="#ecd08f" stroke="#b58d3d" stroke-width="1"/><path d="M1.500 4 H14.500 V12 Q14.500 12.800 13.600 12.800 H2.400 Q1.500 12.800 1.500 12Z" fill="#fffcf2"/><path d="M1.500 8.500 H14.500 V12 Q14.500 12.800 13.600 12.800 H2.400 Q1.500 12.800 1.500 12Z" fill="#f9e7bd"/><path d="M1.500 6.500 H14.500 V8.500 H1.500Z" fill="#fdf3d9"/><path d="M1 3.800 H15" stroke="#c09a4a" stroke-width=".7"/></svg><span style="transform:scaleX(0.947)">UNISTRUT MM</span></div>
  <div class="tr" style="top:288px"><svg class="fi" width="16" height="14" viewBox="0 0 16 14"><path d="M1 2.200 Q1 .800 2.500 .800 H6.500 L8 2.500 H13.500 Q15 2.500 15 4 V12 Q15 13.300 13.600 13.300 H2.400 Q1 13.300 1 12Z" fill="#ecd08f" stroke="#b58d3d" stroke-width="1"/><path d="M1.500 4 H14.500 V12 Q14.500 12.800 13.600 12.800 H2.400 Q1.500 12.800 1.500 12Z" fill="#fffcf2"/><path d="M1.500 8.500 H14.500 V12 Q14.500 12.800 13.600 12.800 H2.400 Q1.500 12.800 1.500 12Z" fill="#f9e7bd"/><path d="M1.500 6.500 H14.500 V8.500 H1.500Z" fill="#fdf3d9"/><path d="M1 3.800 H15" stroke="#c09a4a" stroke-width=".7"/></svg><span style="transform:scaleX(0.930)">UNISTRUT INCH</span></div>
  <div class="tr" style="top:306px"><svg class="fi" width="16" height="14" viewBox="0 0 16 14"><path d="M1 2.200 Q1 .800 2.500 .800 H6.500 L8 2.500 H13.500 Q15 2.500 15 4 V12 Q15 13.300 13.600 13.300 H2.400 Q1 13.300 1 12Z" fill="#ecd08f" stroke="#b58d3d" stroke-width="1"/><path d="M1.500 4 H14.500 V12 Q14.500 12.800 13.600 12.800 H2.400 Q1.500 12.800 1.500 12Z" fill="#fffcf2"/><path d="M1.500 8.500 H14.500 V12 Q14.500 12.800 13.600 12.800 H2.400 Q1.500 12.800 1.500 12Z" fill="#f9e7bd"/><path d="M1.500 6.500 H14.500 V8.500 H1.500Z" fill="#fdf3d9"/><path d="M1 3.800 H15" stroke="#c09a4a" stroke-width=".7"/></svg><span style="transform:scaleX(0.900)">ROBOTUNITS</span></div>
  <div class="tr" style="top:324px"><svg class="fi" width="16" height="14" viewBox="0 0 16 14"><path d="M1 2.200 Q1 .800 2.500 .800 H6.500 L8 2.500 H13.500 Q15 2.500 15 4 V12 Q15 13.300 13.600 13.300 H2.400 Q1 13.300 1 12Z" fill="#ecd08f" stroke="#b58d3d" stroke-width="1"/><path d="M1.500 4 H14.500 V12 Q14.500 12.800 13.600 12.800 H2.400 Q1.500 12.800 1.500 12Z" fill="#fffcf2"/><path d="M1.500 8.500 H14.500 V12 Q14.500 12.800 13.600 12.800 H2.400 Q1.500 12.800 1.500 12Z" fill="#f9e7bd"/><path d="M1.500 6.500 H14.500 V8.500 H1.500Z" fill="#fdf3d9"/><path d="M1 3.800 H15" stroke="#c09a4a" stroke-width=".7"/></svg><span style="transform:scaleX(0.926)">CONTROLLED DYNAMICS</span></div>
 </div>
 <div id="dgrid">
    <div class="cell sel" style="left:1px;top:1px"><svg width="190" height="140" viewBox="0 0 190 140"><rect x="30.0" y="36.0" width="130" height="80" fill="#a3a3a3"/><path d="M95 26V126" stroke="#9b0000" stroke-width="2"/><path d="M74.5 55.5L115.5 96.5M115.5 55.5L74.5 96.5" stroke="#9b0000" stroke-width="1.6"/></svg><div class="lb" style="transform:scaleX(0.912)">RECTANGULAR BEAM</div></div>
  <div class="cell" style="left:191px;top:1px"><svg width="190" height="140" viewBox="0 0 190 140"><rect x="50.0" y="31.0" width="90" height="90" fill="#a3a3a3"/><path d="M95 26V126" stroke="#9b0000" stroke-width="2"/><path d="M74.5 55.5L115.5 96.5M115.5 55.5L74.5 96.5" stroke="#9b0000" stroke-width="1.6"/></svg><div class="lb" style="transform:scaleX(0.896)">SQUARE BEAM</div></div>
  <div class="cell" style="left:381px;top:1px"><svg width="190" height="140" viewBox="0 0 190 140"><circle cx="95" cy="76" r="45" fill="#a3a3a3"/><path d="M95 26V126" stroke="#9b0000" stroke-width="2"/><path d="M74.5 55.5L115.5 96.5M115.5 55.5L74.5 96.5" stroke="#9b0000" stroke-width="1.6"/></svg><div class="lb" style="transform:scaleX(0.929)">ROUND BEAM</div></div>
  <div class="cell" style="left:571px;top:1px"><svg width="190" height="140" viewBox="0 0 190 140"><rect x="34.5" y="35.5" width="121" height="81" rx="7.5" fill="none" stroke="#a3a3a3" stroke-width="9"/><path d="M95 26V126" stroke="#9b0000" stroke-width="2"/><path d="M74.5 55.5L115.5 96.5M115.5 55.5L74.5 96.5" stroke="#9b0000" stroke-width="1.6"/></svg><div class="lb" style="transform:scaleX(0.891)">RECTANGULAR TUBE</div></div>
  <div class="cell" style="left:1px;top:168px"><svg width="190" height="140" viewBox="0 0 190 140"><rect x="54.5" y="35.5" width="81" height="81" rx="6.5" fill="none" stroke="#a3a3a3" stroke-width="9"/><path d="M95 26V126" stroke="#9b0000" stroke-width="2"/><path d="M74.5 55.5L115.5 96.5M115.5 55.5L74.5 96.5" stroke="#9b0000" stroke-width="1.6"/></svg><div class="lb" style="transform:scaleX(0.872)">SQUARE TUBE</div></div>
  <div class="cell" style="left:191px;top:168px"><svg width="190" height="140" viewBox="0 0 190 140"><circle cx="95" cy="76" r="40.5" fill="none" stroke="#a3a3a3" stroke-width="9"/><path d="M95 26V126" stroke="#9b0000" stroke-width="2"/><path d="M74.5 55.5L115.5 96.5M115.5 55.5L74.5 96.5" stroke="#9b0000" stroke-width="1.6"/></svg><div class="lb" style="transform:scaleX(0.841)">PIPE</div></div>
  <div class="cell" style="left:381px;top:168px"><svg width="190" height="140" viewBox="0 0 190 140"><path d="M59 31 H66 Q71 31 71 36 V97 Q71 109 83 109 H126 Q131 109 131 114 V121 H59Z" fill="#a3a3a3"/><path d="M95 26V126" stroke="#9b0000" stroke-width="2"/><path d="M74.5 55.5L115.5 96.5M115.5 55.5L74.5 96.5" stroke="#9b0000" stroke-width="1.6"/></svg><div class="lb" style="transform:scaleX(0.921)">ANGLE BEAM</div></div>
  <div class="cell" style="left:571px;top:168px"><svg width="190" height="140" viewBox="0 0 190 140"><path d="M33 40 H42 Q46 40 46.500 44 L50 92 Q50.500 99 57 99 H133 Q139.500 99 140 92 L143.500 44 Q144 40 148 40 H157 V111.500 H33Z" fill="#a3a3a3"/><path d="M95 26V126" stroke="#9b0000" stroke-width="2"/><path d="M74.5 55.5L115.5 96.5M115.5 55.5L74.5 96.5" stroke="#9b0000" stroke-width="1.6"/></svg><div class="lb" style="transform:scaleX(0.951)">CHANNEL BEAM</div></div>
  <div class="cell" style="left:1px;top:335px"><svg width="190" height="140" viewBox="0 0 190 140"><path d="M34 30 H49 V101 Q49 107 55 107 H134 Q140 107 140 101 V30 H155 V106 Q155 122 139 122 H50 Q34 122 34 106Z" fill="#a3a3a3"/><path d="M95 26V126" stroke="#9b0000" stroke-width="2"/><path d="M74.5 55.5L115.5 96.5M115.5 55.5L74.5 96.5" stroke="#9b0000" stroke-width="1.6"/></svg><div class="lb" style="transform:scaleX(0.925)">CHANNEL BEAM ROLLED</div></div>
  <div class="cell" style="left:191px;top:335px"><svg width="190" height="140" viewBox="0 0 190 140"><path d="M50 34 H140 V42.500 H111 Q101 42.500 101 52 V117.500 H89 V52 Q89 42.500 79 42.500 H50Z" fill="#a3a3a3"/><path d="M95 26V126" stroke="#9b0000" stroke-width="2"/><path d="M74.5 55.5L115.5 96.5M115.5 55.5L74.5 96.5" stroke="#9b0000" stroke-width="1.6"/></svg><div class="lb" style="transform:scaleX(0.978)">T-BEAM</div></div>
  <div class="cell" style="left:381px;top:335px"><svg width="190" height="140" viewBox="0 0 190 140"><path d="M49.500 32 H140 V39 Q140 42 137 42.500 L112 45 Q102 46 101.500 56 L100 120 H90 L88.500 56 Q88 46 78 45 L53 42.500 Q49.500 42 49.500 39Z" fill="#a3a3a3"/><path d="M95 26V126" stroke="#9b0000" stroke-width="2"/><path d="M74.5 55.5L115.5 96.5M115.5 55.5L74.5 96.5" stroke="#9b0000" stroke-width="1.6"/></svg><div class="lb" style="transform:scaleX(0.946)">T-BEAM S</div></div>
  <div class="cell" style="left:571px;top:335px"><svg width="190" height="140" viewBox="0 0 190 140"><path d="M54 28 H136 V39.500 H105 Q100 39.500 100 44.500 V107 Q100 112 105 112 H136 V124 H54 V112 H85 Q90 112 90 107 V44.500 Q90 39.500 85 39.500 H54Z" fill="#a3a3a3"/><path d="M95 26V126" stroke="#9b0000" stroke-width="2"/><path d="M74.5 55.5L115.5 96.5M115.5 55.5L74.5 96.5" stroke="#9b0000" stroke-width="1.6"/></svg><div class="lb" style="transform:scaleX(0.922)">I BEAM</div></div>
  <div class="cell" style="left:1px;top:502px"><svg width="190" height="140" viewBox="0 0 190 140"><path d="M70.500 29.500 H119 V35 Q119 37 117 37.300 L105 39.500 Q99 40.500 99 47 V105.500 Q99 112 105 113 L117 115.200 Q119 115.500 119 117.500 V123 H70.500 V117.500 Q70.500 115.500 72.500 115.200 L85 113 Q91 112 91 105.500 V47 Q91 40.500 85 39.500 L72.500 37.300 Q70.500 37 70.500 35Z" fill="#a3a3a3"/><path d="M95 26V126" stroke="#9b0000" stroke-width="2"/><path d="M74.5 55.5L115.5 96.5M115.5 55.5L74.5 96.5" stroke="#9b0000" stroke-width="1.6"/></svg><div class="lb" style="transform:scaleX(0.930)">I-BEAM S</div></div>
  <div class="cell" style="left:191px;top:502px"><svg width="190" height="140" viewBox="0 0 190 140"><path d="M80 30.500 H62 Q50 30.500 50 42.500 V109 Q50 121 62 121 H128 Q140 121 140 109 V42.500 Q140 30.500 128 30.500 H110 V36 Q110 42.500 116 42.500 H124 Q128 42.500 128 46.500 V105 Q128 109 124 109 H66 Q62 109 62 105 V46.500 Q62 42.500 66 42.500 H74 Q80 42.500 80 36Z" fill="#a3a3a3"/><path d="M95 26V126" stroke="#9b0000" stroke-width="2"/><path d="M74.5 55.5L115.5 96.5M115.5 55.5L74.5 96.5" stroke="#9b0000" stroke-width="1.6"/></svg><div class="lb" style="transform:scaleX(0.922)">C BEAM</div></div>
  <div class="cell" style="left:381px;top:502px"><svg width="190" height="140" viewBox="0 0 190 140"><rect x="30.0" y="36.0" width="130" height="80" fill="#a3a3a3"/><path d="M95 26V126" stroke="#9b0000" stroke-width="2"/><path d="M74.5 55.5L115.5 96.5M115.5 55.5L74.5 96.5" stroke="#9b0000" stroke-width="1.6"/></svg><div class="lb" style="transform:scaleX(0.881)">PLATE</div></div>
  <div class="abs" style="left:760px;top:0;width:6px;height:669px;background:#f3f4f5;border-left:1px solid #d0d3d5"></div>
  <div class="abs" style="left:760px;top:0;width:6px;height:13px;border:1px solid #c3c7c9;background:#f4f5f6"></div>
  <div class="abs" style="left:760px;top:656px;width:6px;height:13px;border:1px solid #c3c7c9;background:#f4f5f6"></div>
 </div>
 <div class="abs" style="left:0;top:728px;width:1019px;height:1px;background:#c9cccd"></div>
 <div class="abs" style="left:987px;top:739px;width:60px;height:23px;border:1px solid #bfc3c5;background:#fbfbfc"></div>
 <div class="t" style="left:992px;top:745px;font-size:12.500px;color:#333">Cancel</div>
</div>
<div id="explorer">
 <div id="etabs">
  <div class="abs" style="left:174px;top:7px;width:167px;height:32px;background:#f5f3eb;border-radius:8px 8px 0 0"></div>
  <div class="abs" style="left:166px;top:31px;width:8px;height:8px;background:radial-gradient(circle at 0 0,transparent 8px,#f5f3eb 8.500px)"></div>
  <div class="abs" style="left:341px;top:31px;width:8px;height:8px;background:radial-gradient(circle at 100% 0,transparent 8px,#f5f3eb 8.500px)"></div>
  <div class="abs" style="left:17px;top:16px"><svg width="16" height="14" viewBox="0 0 16 14"><path d="M0 2 Q0 .500 1.500 .500 H5.500 L7.500 2.500 H14.500 Q16 2.500 16 4 V12 Q16 13.500 14.500 13.500 H1.500 Q0 13.500 0 12Z" fill="#e8a90a"/><path d="M0 4.500 Q0 3.500 1 3.500 H15 Q16 3.500 16 4.500 V12 Q16 13.500 14.500 13.500 H1.500 Q0 13.500 0 12Z" fill="#ffd764"/><path d="M0 9 H16 V12 Q16 13.500 14.500 13.500 H1.500 Q0 13.500 0 12Z" fill="#fcca4a" opacity=".6"/></svg></div>
  <div class="t" style="left:43px;top:18px;font-size:12.500px;color:#5a5a55">afx</div>
  <svg class="abs" style="left:147px;top:18px" width="10" height="10" viewBox="0 0 10 10"><path d="M.500 .500L9.500 9.500M9.500 .500L.500 9.500" stroke="#333" stroke-width="1.100"/></svg>
  <div class="abs" style="left:183px;top:16px"><svg width="16" height="14" viewBox="0 0 16 14"><path d="M0 2 Q0 .500 1.500 .500 H5.500 L7.500 2.500 H14.500 Q16 2.500 16 4 V12 Q16 13.500 14.500 13.500 H1.500 Q0 13.500 0 12Z" fill="#e8a90a"/><path d="M0 4.500 Q0 3.500 1 3.500 H15 Q16 3.500 16 4.500 V12 Q16 13.500 14.500 13.500 H1.500 Q0 13.500 0 12Z" fill="#ffd764"/><path d="M0 9 H16 V12 Q16 13.500 14.500 13.500 H1.500 Q0 13.500 0 12Z" fill="#fcca4a" opacity=".6"/></svg></div>
  <div class="t" style="left:209px;top:18px;font-size:12.500px;color:#1a1a1a;font-weight:bold;transform:scaleX(.91);transform-origin:0 50%">profiles</div>
  <svg class="abs" style="left:313px;top:18px" width="10" height="10" viewBox="0 0 10 10"><path d="M.500 .500L9.500 9.500M9.500 .500L.500 9.500" stroke="#333" stroke-width="1.100"/></svg>
  <svg class="abs" style="left:348px;top:15px" width="17" height="17" viewBox="0 0 17 17"><rect x="3" y="1.500" width="13" height="13" rx="2" fill="#0f5fb8"/><rect x=".500" y="1" width="13.500" height="13.500" rx="2" fill="#2f8fe6"/><path d="M.500 12 L5 7.500 Q6 6.500 7 7.500 L14 14.500 H2.500 Q.500 14.500 .500 12.500Z" fill="#e9f3fd"/><circle cx="10" cy="5" r="1.500" fill="#e9f3fd"/></svg>
  <div class="t" style="left:375px;top:18px;font-size:12.500px;color:#5a5a55">Gallery</div>
  <svg class="abs" style="left:479px;top:18px" width="10" height="10" viewBox="0 0 10 10"><path d="M.500 .500L9.500 9.500M9.500 .500L.500 9.500" stroke="#333" stroke-width="1.100"/></svg>
  <div class="abs" style="left:505px;top:15px;width:1px;height:16px;background:#d3ceba"></div>
  <svg class="abs" style="left:523px;top:18px" width="11" height="11" viewBox="0 0 11 11"><path d="M5.500 .500V10.500M.500 5.500H10.500" stroke="#333" stroke-width="1.100"/></svg>
  <div class="abs" style="left:613px;top:14px;width:10px;height:1.300px;background:#1a1a1a"></div>
  <div class="abs" style="left:658px;top:9px;width:10px;height:10px;border:1.300px solid #1a1a1a;border-radius:1.500px"></div>
  <svg class="abs" style="left:703px;top:9px" width="11" height="11" viewBox="0 0 11 11"><path d="M.500 .500L10.500 10.500M10.500 .500L.500 10.500" stroke="#1a1a1a" stroke-width="1.200"/></svg>
 </div>
 <div id="eaddr">
  <svg class="abs" style="left:18px;top:15px" width="200" height="18" viewBox="0 0 200 18">
   <path d="M15.500 9H2.500M8 3.500L2.500 9L8 14.500" fill="none" stroke="#333" stroke-width="1.200"/>
   <path d="M50.500 9H63.500M58 3.500L63.500 9L58 14.500" fill="none" stroke="#b5b5b0" stroke-width="1.200"/>
   <path d="M104.500 15.500V2.500M99 8L104.500 2.500L110 8" fill="none" stroke="#333" stroke-width="1.200"/>
   <path d="M158 5.200 A5.800 5.800 0 1 0 159 10.500 M158.500 1.800V5.600H154.700" fill="none" stroke="#333" stroke-width="1.200"/>
  </svg>
  <div class="abs" style="left:201px;top:8px;width:370px;height:32px;background:#fbfaf6;border-radius:5px"></div>
  <svg class="abs" style="left:214px;top:15px" width="16" height="16" viewBox="0 0 16 16"><rect x="1" y="1.500" width="14" height="10" rx="1.500" fill="none" stroke="#666" stroke-width="1.200"/><path d="M6 11.500V13.500M10 11.500V13.500M4 14.200H12" stroke="#666" stroke-width="1.200"/></svg>
  <svg class="abs" style="left:248px;top:19px" width="6" height="10" viewBox="0 0 6 10"><path d="M1 1L5 5L1 9" fill="none" stroke="#444" stroke-width="1.100"/></svg>
  <div class="abs" style="left:274px;top:22px;width:2.200px;height:2.200px;background:#333;box-shadow:4.500px 0 #333,9px 0 #333;border-radius:50%"></div>
  <div class="t" style="left:305px;top:17px;font-size:14px;color:#1a1a1a;transform:scaleX(1.005);transform-origin:0 50%">customization</div>
  <svg class="abs" style="left:409px;top:19px" width="6" height="10" viewBox="0 0 6 10"><path d="M1 1L5 5L1 9" fill="none" stroke="#444" stroke-width="1.100"/></svg>
  <div class="t" style="left:433px;top:17px;font-size:14px;color:#1a1a1a;transform:scaleX(1.0);transform-origin:0 50%">profiles</div>
  <svg class="abs" style="left:497px;top:19px" width="6" height="10" viewBox="0 0 6 10"><path d="M1 1L5 5L1 9" fill="none" stroke="#444" stroke-width="1.100"/></svg>
  <div class="abs" style="left:579px;top:8px;width:142px;height:32px;background:#fbfaf6;border-radius:5px"></div>
  <div class="t" style="left:594px;top:17px;font-size:14px;color:#666;width:83px;overflow:hidden;transform:scaleX(.94);transform-origin:0 50%">Search profile</div>
  <svg class="abs" style="left:695px;top:18px" width="13" height="13" viewBox="0 0 13 13"><circle cx="5.200" cy="5.200" r="4" fill="none" stroke="#555" stroke-width="1.100"/><path d="M8.200 8.200L12 12" stroke="#555" stroke-width="1.100"/></svg>
 </div>
 <div id="etool">
  <svg class="abs" style="left:17px;top:16px" width="17" height="17" viewBox="0 0 17 17"><circle cx="8.500" cy="8.500" r="7.300" fill="none" stroke="#333" stroke-width="1.100"/><path d="M8.500 5V12M5 8.500H12" stroke="#1b6fd1" stroke-width="1.200"/></svg>
  <div class="t" style="left:42px;top:19px;font-size:12.500px;color:#1a1a1a">New</div>
  <svg class="abs" style="left:71px;top:23px" width="7" height="5" viewBox="0 0 7 5"><path d="M.500 .800L3.500 3.800L6.500 .800" fill="none" stroke="#777" stroke-width="1"/></svg>
  <div class="abs" style="left:95px;top:10px;width:1px;height:28px;background:#e4e4e4"></div>
  <svg class="abs" style="left:113px;top:15px" width="18" height="18" viewBox="0 0 18 18"><path d="M5 1L11.500 12M13 1L6.500 12" stroke="#333" stroke-width="1.100" fill="none"/><circle cx="4.500" cy="14" r="2.500" fill="none" stroke="#1b6fd1" stroke-width="1.200"/><circle cx="13.500" cy="14" r="2.500" fill="none" stroke="#1b6fd1" stroke-width="1.200"/></svg>
  <svg class="abs" style="left:162px;top:16px" width="17" height="17" viewBox="0 0 17 17"><rect x="6" y="1" width="9" height="11" rx="2" fill="none" stroke="#1b6fd1" stroke-width="1.200"/><path d="M4 4 Q2 4 2 6 V13 Q2 15.500 4.500 15.500 H9 Q11 15.500 11 14" fill="none" stroke="#333" stroke-width="1.100"/></svg>
  <svg class="abs" style="left:210px;top:15px" width="17" height="18" viewBox="0 0 17 18"><path d="M5 3H3.500Q2 3 2 4.500V15Q2 16.500 3.500 16.500H6" fill="none" stroke="#bdbdbd" stroke-width="1.100"/><rect x="5" y="1.500" width="6" height="3" rx="1" fill="none" stroke="#bdbdbd" stroke-width="1.100"/><path d="M11 3h1.500q1.500 0 1.500 1.500V6" fill="none" stroke="#bdbdbd" stroke-width="1.100"/><rect x="7.500" y="7" width="8" height="10" rx="1.500" fill="none" stroke="#a9c9ee" stroke-width="1.200"/></svg>
  <svg class="abs" style="left:257px;top:15px" width="18" height="18" viewBox="0 0 18 18"><path d="M10 3.500H3Q1.500 3.500 1.500 5V12Q1.500 13.500 3 13.500H10M14 3.500H15.500Q17 3.500 17 5V12Q17 13.500 15.500 13.500H14" fill="none" stroke="#333" stroke-width="1.100"/><path d="M12 1V17M10 1H14M10 17H14" stroke="#1b6fd1" stroke-width="1.200" fill="none"/><path d="M4 11.500L6.300 5.500L8.600 11.500M4.800 9.500H7.800" fill="none" stroke="#1b6fd1" stroke-width="1.100"/></svg>
  <svg class="abs" style="left:305px;top:15px" width="18" height="18" viewBox="0 0 18 18"><path d="M7 4.500H4Q2 4.500 2 6.500V13.500Q2 15.500 4 15.500H11.500Q13.500 15.500 13.500 13.500V13" fill="none" stroke="#333" stroke-width="1.100"/><path d="M10.500 2L16 7L10.500 12V9Q7 9 5.500 11.500Q6 6 10.500 5Z" fill="none" stroke="#1b6fd1" stroke-width="1.200" stroke-linejoin="round"/></svg>
  <svg class="abs" style="left:353px;top:15px" width="17" height="18" viewBox="0 0 17 18"><path d="M1.500 4H15.500M6 4Q6 1.500 8.500 1.500Q11 1.500 11 4M3 4L4 15Q4.200 16.500 5.800 16.500H11.200Q12.800 16.500 13 15L14 4M7 7.500V13M10 7.500V13" fill="none" stroke="#333" stroke-width="1.100"/></svg>
  <div class="abs" style="left:388px;top:10px;width:1px;height:28px;background:#e4e4e4"></div>
  <svg class="abs" style="left:404px;top:17px" width="18" height="15" viewBox="0 0 18 15"><path d="M5 14V1.500M1.500 5L5 1.500L8.500 5" fill="none" stroke="#333" stroke-width="1.100"/><path d="M12.500 1V13.500M9 10L12.500 13.500L16 10" fill="none" stroke="#1b6fd1" stroke-width="1.200"/></svg>
  <div class="t" style="left:429px;top:19px;font-size:12.500px;color:#1a1a1a">Sort</div>
  <svg class="abs" style="left:456px;top:23px" width="7" height="5" viewBox="0 0 7 5"><path d="M.500 .800L3.500 3.800L6.500 .800" fill="none" stroke="#777" stroke-width="1"/></svg>
  <svg class="abs" style="left:491px;top:19px" width="17" height="11" viewBox="0 0 17 11"><path d="M.500 1H16.500M.500 4H16.500M.500 7H16.500M.500 10H16.500" stroke="#333" stroke-width="1"/></svg>
  <div class="t" style="left:516px;top:19px;font-size:12.500px;color:#1a1a1a">View</div>
  <svg class="abs" style="left:547px;top:23px" width="7" height="5" viewBox="0 0 7 5"><path d="M.500 .800L3.500 3.800L6.500 .800" fill="none" stroke="#777" stroke-width="1"/></svg>
  <div class="abs" style="left:571px;top:10px;width:1px;height:28px;background:#e4e4e4"></div>
  <div class="abs" style="left:588px;top:24px;width:2.600px;height:2.600px;background:#1a1a1a;box-shadow:6px 0 #1a1a1a,12px 0 #1a1a1a;border-radius:50%"></div>
  <svg class="abs" style="left:650px;top:18px" width="17" height="13" viewBox="0 0 17 13"><rect x=".600" y=".600" width="15.800" height="11.800" rx="2.500" fill="none" stroke="#333" stroke-width="1.100"/><path d="M10 .600H14Q16.400 .600 16.400 3V10Q16.400 12.400 14 12.400H10Z" fill="none" stroke="#1b6fd1" stroke-width="1.200"/><path d="M12 4.500h2.500M12 6.500h2.500M12 8.500h2.500" stroke="#1b6fd1" stroke-width=".9"/></svg>
  <div class="t" style="left:674px;top:19px;font-size:12.500px;color:#1a1a1a">Details</div>
 </div>
 <div id="ebody">
  <div id="enav">
      <div class="abs" style="left:34px;top:8.0px;width:14.500px;height:14px;overflow:hidden"><svg width="16" height="14" viewBox="0 0 16 14"><path d="M0 2 Q0 .500 1.500 .500 H5.500 L7.500 2.500 H14.500 Q16 2.500 16 4 V12 Q16 13.500 14.500 13.500 H1.500 Q0 13.500 0 12Z" fill="#e8a90a"/><path d="M0 4.500 Q0 3.500 1 3.500 H15 Q16 3.500 16 4.500 V12 Q16 13.500 14.500 13.500 H1.500 Q0 13.500 0 12Z" fill="#ffd764"/><path d="M0 9 H16 V12 Q16 13.500 14.500 13.500 H1.500 Q0 13.500 0 12Z" fill="#fcca4a" opacity=".6"/></svg></div>
   <div class="abs" style="left:34px;top:40.2px;width:14.500px;height:14px;overflow:hidden"><svg width="16" height="14" viewBox="0 0 16 14"><path d="M0 2 Q0 .500 1.500 .500 H5.500 L7.500 2.500 H14.500 Q16 2.500 16 4 V12 Q16 13.500 14.500 13.500 H1.500 Q0 13.500 0 12Z" fill="#e8a90a"/><path d="M0 4.500 Q0 3.500 1 3.500 H15 Q16 3.500 16 4.500 V12 Q16 13.500 14.500 13.500 H1.500 Q0 13.500 0 12Z" fill="#ffd764"/><path d="M0 9 H16 V12 Q16 13.500 14.500 13.500 H1.500 Q0 13.500 0 12Z" fill="#fcca4a" opacity=".6"/></svg></div>
   <div class="abs" style="left:34px;top:72.4px;width:14.500px;height:14px;overflow:hidden"><svg width="16" height="14" viewBox="0 0 16 14"><path d="M0 2 Q0 .500 1.500 .500 H5.500 L7.500 2.500 H14.500 Q16 2.500 16 4 V12 Q16 13.500 14.500 13.500 H1.500 Q0 13.500 0 12Z" fill="#e8a90a"/><path d="M0 4.500 Q0 3.500 1 3.500 H15 Q16 3.500 16 4.500 V12 Q16 13.500 14.500 13.500 H1.500 Q0 13.500 0 12Z" fill="#ffd764"/><path d="M0 9 H16 V12 Q16 13.500 14.500 13.500 H1.500 Q0 13.500 0 12Z" fill="#fcca4a" opacity=".6"/></svg></div>
   <div class="abs" style="left:34px;top:104.6px;width:14.500px;height:14px;overflow:hidden"><svg width="16" height="14" viewBox="0 0 16 14"><path d="M0 2 Q0 .500 1.500 .500 H5.500 L7.500 2.500 H14.500 Q16 2.500 16 4 V12 Q16 13.500 14.500 13.500 H1.500 Q0 13.500 0 12Z" fill="#e8a90a"/><path d="M0 4.500 Q0 3.500 1 3.500 H15 Q16 3.500 16 4.500 V12 Q16 13.500 14.500 13.500 H1.500 Q0 13.500 0 12Z" fill="#ffd764"/><path d="M0 9 H16 V12 Q16 13.500 14.500 13.500 H1.500 Q0 13.500 0 12Z" fill="#fcca4a" opacity=".6"/></svg></div>
   <div class="abs" style="left:34px;top:136.8px;width:14.500px;height:14px;overflow:hidden"><svg width="16" height="14" viewBox="0 0 16 14"><path d="M0 2 Q0 .500 1.500 .500 H5.500 L7.500 2.500 H14.500 Q16 2.500 16 4 V12 Q16 13.500 14.500 13.500 H1.500 Q0 13.500 0 12Z" fill="#e8a90a"/><path d="M0 4.500 Q0 3.500 1 3.500 H15 Q16 3.500 16 4.500 V12 Q16 13.500 14.500 13.500 H1.500 Q0 13.500 0 12Z" fill="#ffd764"/><path d="M0 9 H16 V12 Q16 13.500 14.500 13.500 H1.500 Q0 13.500 0 12Z" fill="#fcca4a" opacity=".6"/></svg></div>
   <div class="abs" style="left:34px;top:169.0px;width:14.500px;height:14px;overflow:hidden"><svg width="16" height="14" viewBox="0 0 16 14"><path d="M0 2 Q0 .500 1.500 .500 H5.500 L7.500 2.500 H14.500 Q16 2.500 16 4 V12 Q16 13.500 14.500 13.500 H1.500 Q0 13.500 0 12Z" fill="#e8a90a"/><path d="M0 4.500 Q0 3.500 1 3.500 H15 Q16 3.500 16 4.500 V12 Q16 13.500 14.500 13.500 H1.500 Q0 13.500 0 12Z" fill="#ffd764"/><path d="M0 9 H16 V12 Q16 13.500 14.500 13.500 H1.500 Q0 13.500 0 12Z" fill="#fcca4a" opacity=".6"/></svg></div>
   <div class="abs" style="left:34px;top:201.2px;width:14.500px;height:14px;overflow:hidden"><svg width="16" height="14" viewBox="0 0 16 14"><path d="M0 2 Q0 .500 1.500 .500 H5.500 L7.500 2.500 H14.500 Q16 2.500 16 4 V12 Q16 13.500 14.500 13.500 H1.500 Q0 13.500 0 12Z" fill="#e8a90a"/><path d="M0 4.500 Q0 3.500 1 3.500 H15 Q16 3.500 16 4.500 V12 Q16 13.500 14.500 13.500 H1.500 Q0 13.500 0 12Z" fill="#ffd764"/><path d="M0 9 H16 V12 Q16 13.500 14.500 13.500 H1.500 Q0 13.500 0 12Z" fill="#fcca4a" opacity=".6"/></svg></div>
   <div class="abs" style="left:34px;top:233.4px;width:14.500px;height:14px;overflow:hidden"><svg width="16" height="14" viewBox="0 0 16 14"><path d="M0 2 Q0 .500 1.500 .500 H5.500 L7.500 2.500 H14.500 Q16 2.500 16 4 V12 Q16 13.500 14.500 13.500 H1.500 Q0 13.500 0 12Z" fill="#e8a90a"/><path d="M0 4.500 Q0 3.500 1 3.500 H15 Q16 3.500 16 4.500 V12 Q16 13.500 14.500 13.500 H1.500 Q0 13.500 0 12Z" fill="#ffd764"/><path d="M0 9 H16 V12 Q16 13.500 14.500 13.500 H1.500 Q0 13.500 0 12Z" fill="#fcca4a" opacity=".6"/></svg></div>
   <div class="abs" style="left:34px;top:265.6px;width:14.500px;height:14px;overflow:hidden"><svg width="16" height="14" viewBox="0 0 16 14"><path d="M0 2 Q0 .500 1.500 .500 H5.500 L7.500 2.500 H14.500 Q16 2.500 16 4 V12 Q16 13.500 14.500 13.500 H1.500 Q0 13.500 0 12Z" fill="#e8a90a"/><path d="M0 4.500 Q0 3.500 1 3.500 H15 Q16 3.500 16 4.500 V12 Q16 13.500 14.500 13.500 H1.500 Q0 13.500 0 12Z" fill="#ffd764"/><path d="M0 9 H16 V12 Q16 13.500 14.500 13.500 H1.500 Q0 13.500 0 12Z" fill="#fcca4a" opacity=".6"/></svg></div>
   <div class="abs" style="left:50px;top:0;width:15px;height:340px;background:#f0f0f0"></div>
   <div class="abs" style="left:56px;top:148px;width:2px;height:130px;background:#8a8a8a;border-radius:1px"></div>
   <div class="abs" style="left:10px;top:304px;width:30px;height:1px;background:#dcdcdc"></div>
   <svg class="abs" style="left:11px;top:332.500px" width="10" height="6" viewBox="0 0 10 6"><path d="M.800 .800L5 5L9.200 .800" fill="none" stroke="#222" stroke-width="1.200"/></svg>
   <div class="abs" style="left:34px;top:329px;width:15px;height:14px;background:linear-gradient(135deg,#35b4e8,#0a7fc4)"></div>
  </div>
  <div id="ehead">
   <svg class="abs" style="left:130px;top:1px" width="9" height="5" viewBox="0 0 9 5"><path d="M.500 4.500L4.500 .700L8.500 4.500" fill="none" stroke="#555" stroke-width="1"/></svg>
   <div class="t" style="left:16px;top:7px">Name</div><div class="t" style="left:264px;top:7px">Date modified</div><div class="t" style="left:408px;top:7px">Type</div><div class="t" style="left:528px;top:7px">Size</div>
   <i style="left:257px"></i><i style="left:401px"></i><i style="left:521px"></i><i style="left:601px"></i>
  </div>
    <div class="fr" style="top:28.5px"><svg class="ic" width="14" height="17" viewBox="0 0 14 17"><path d="M1.500 .500 H9 L12.500 4 V16.500 H1.500Z" fill="#fff" stroke="#8a8a8a" stroke-width="1"/><path d="M9 .500 V4 H12.500" fill="none" stroke="#8a8a8a" stroke-width=".9"/><path d="M3.500 5.500h5M3.500 7.500h7M3.500 9.500h7M3.500 11.500h7M3.500 13.500h7" stroke="#9a9a9a" stroke-width=".8"/></svg><span class="n">drawing_setup</span><span class="d">3/28/2023 12:25 PM</span><span class="ty">Text Document</span><span class="sz">1 KB</span></div>
  <div class="fr" style="top:56.5px"><svg class="ic" width="14" height="17" viewBox="0 0 14 17"><path d="M1.500 .500 H9 L12.500 4 V16.500 H1.500Z" fill="#fff" stroke="#6e6e6e" stroke-width="1"/><path d="M9 .500 V4 H12.500" fill="none" stroke="#6e6e6e" stroke-width=".9"/><rect x="3.500" y="5.500" width="7" height="7" rx="1" fill="#1e74d6"/><path d="M4.500 11.500 L7 8.500 L9.500 11.500Z" fill="#bfe0ff"/><circle cx="8.800" cy="7.300" r=".9" fill="#fff"/></svg><span class="n">frameworld_inch</span><span class="d">3/28/2023 12:25 PM</span><span class="ty">PNG File</span><span class="sz">4 KB</span></div>
  <div class="fr" style="top:84.5px"><svg class="ic" width="14" height="17" viewBox="0 0 14 17"><path d="M1.500 .500 H9 L12.500 4 V16.500 H1.500Z" fill="#fff" stroke="#6e6e6e" stroke-width="1"/><path d="M9 .500 V4 H12.500" fill="none" stroke="#6e6e6e" stroke-width=".9"/><rect x="3.500" y="5.500" width="7" height="7" rx="1" fill="#1e74d6"/><path d="M4.500 11.500 L7 8.500 L9.500 11.500Z" fill="#bfe0ff"/><circle cx="8.800" cy="7.300" r=".9" fill="#fff"/></svg><span class="n">item</span><span class="d">3/28/2023 12:26 PM</span><span class="ty">PNG File</span><span class="sz">2 KB</span></div>
  <div class="fr" style="top:112.5px"><svg class="ic" width="14" height="17" viewBox="0 0 14 17"><path d="M1.500 .500 H9 L12.500 4 V16.500 H1.500Z" fill="#fff" stroke="#6e6e6e" stroke-width="1"/><path d="M9 .500 V4 H12.500" fill="none" stroke="#6e6e6e" stroke-width=".9"/><rect x="3.500" y="5.500" width="7" height="7" rx="1" fill="#1e74d6"/><path d="M4.500 11.500 L7 8.500 L9.500 11.500Z" fill="#bfe0ff"/><circle cx="8.800" cy="7.300" r=".9" fill="#fff"/></svg><span class="n">kanya</span><span class="d">3/28/2023 12:26 PM</span><span class="ty">PNG File</span><span class="sz">3 KB</span></div>
  <div class="fr" style="top:140.5px"><svg class="ic" width="14" height="17" viewBox="0 0 14 17"><path d="M1.500 .500 H9 L12.500 4 V16.500 H1.500Z" fill="#fff" stroke="#6e6e6e" stroke-width="1"/><path d="M9 .500 V4 H12.500" fill="none" stroke="#6e6e6e" stroke-width=".9"/><rect x="3.500" y="5.500" width="7" height="7" rx="1" fill="#1e74d6"/><path d="M4.500 11.500 L7 8.500 L9.500 11.500Z" fill="#bfe0ff"/><circle cx="8.800" cy="7.300" r=".9" fill="#fff"/></svg><span class="n">maytec</span><span class="d">3/28/2023 12:26 PM</span><span class="ty">PNG File</span><span class="sz">3 KB</span></div>
  <div class="fr" style="top:168.5px"><svg class="ic" width="14" height="17" viewBox="0 0 14 17"><path d="M1.500 .500 H9 L12.500 4 V16.500 H1.500Z" fill="#fff" stroke="#6e6e6e" stroke-width="1"/><path d="M9 .500 V4 H12.500" fill="none" stroke="#6e6e6e" stroke-width=".9"/><rect x="3.500" y="5.500" width="7" height="7" rx="1" fill="#1e74d6"/><path d="M4.500 11.500 L7 8.500 L9.500 11.500Z" fill="#bfe0ff"/><circle cx="8.800" cy="7.300" r=".9" fill="#fff"/></svg><span class="n">minitec</span><span class="d">3/28/2023 12:26 PM</span><span class="ty">PNG File</span><span class="sz">3 KB</span></div>
  <div class="fr" style="top:196.5px"><svg class="ic" width="14" height="17" viewBox="0 0 14 17"><path d="M1.500 .500 H9 L12.500 4 V16.500 H1.500Z" fill="#fff" stroke="#8a8a8a" stroke-width="1"/><path d="M9 .500 V4 H12.500" fill="none" stroke="#8a8a8a" stroke-width=".9"/><path d="M3.500 5.500h5M3.500 7.500h7M3.500 9.500h7M3.500 11.500h7M3.500 13.500h7" stroke="#9a9a9a" stroke-width=".8"/></svg><span class="n">param_relations</span><span class="d">3/28/2023 12:26 PM</span><span class="ty">Text Document</span><span class="sz">1 KB</span></div>
  <div class="fr" style="top:224.5px"><svg class="ic" width="14" height="17" viewBox="0 0 14 17"><path d="M1.500 .500 H9 L12.500 4 V16.500 H1.500Z" fill="#fff" stroke="#6e6e6e" stroke-width="1"/><path d="M9 .500 V4 H12.500" fill="none" stroke="#6e6e6e" stroke-width=".9"/><rect x="3.500" y="5.500" width="7" height="7" rx="1" fill="#1e74d6"/><path d="M4.500 11.500 L7 8.500 L9.500 11.500Z" fill="#bfe0ff"/><circle cx="8.800" cy="7.300" r=".9" fill="#fff"/></svg><span class="n">robotunits</span><span class="d">3/28/2023 12:26 PM</span><span class="ty">PNG File</span><span class="sz">3 KB</span></div>
  <div class="fr" style="top:252.5px"><svg class="ic" width="14" height="17" viewBox="0 0 14 17"><path d="M1.500 .500 H9 L12.500 4 V16.500 H1.500Z" fill="#fff" stroke="#6e6e6e" stroke-width="1"/><path d="M9 .500 V4 H12.500" fill="none" stroke="#6e6e6e" stroke-width=".9"/><rect x="3.500" y="5.500" width="7" height="7" rx="1" fill="#1e74d6"/><path d="M4.500 11.500 L7 8.500 L9.500 11.500Z" fill="#bfe0ff"/><circle cx="8.800" cy="7.300" r=".9" fill="#fff"/></svg><span class="n">rose+krieger</span><span class="d">3/28/2023 12:26 PM</span><span class="ty">PNG File</span><span class="sz">3 KB</span></div>
  <div class="fr sel" style="top:280.5px"><svg class="ic" width="14" height="17" viewBox="0 0 14 17"><path d="M1.500 .500 H9 L12.500 4 V16.500 H1.500Z" fill="#fff" stroke="#8a8a8a" stroke-width="1"/><path d="M9 .500 V4 H12.500" fill="none" stroke="#8a8a8a" stroke-width=".9"/><path d="M3.500 5.500h5M3.500 7.500h7M3.500 9.500h7M3.500 11.500h7M3.500 13.500h7" stroke="#9a9a9a" stroke-width=".8"/></svg><span class="n">sel_list</span><span class="d">3/4/2025 12:44 PM</span><span class="ty">Text Document</span><span class="sz">1 KB</span></div>
  <div class="fr" style="top:308.5px"><svg class="ic" width="14" height="17" viewBox="0 0 14 17"><path d="M1.500 .500 H9 L12.500 4 V16.500 H1.500Z" fill="#fff" stroke="#6e6e6e" stroke-width="1"/><path d="M9 .500 V4 H12.500" fill="none" stroke="#6e6e6e" stroke-width=".9"/><rect x="3.500" y="5.500" width="7" height="7" rx="1" fill="#1e74d6"/><path d="M4.500 11.500 L7 8.500 L9.500 11.500Z" fill="#bfe0ff"/><circle cx="8.800" cy="7.300" r=".9" fill="#fff"/></svg><span class="n">sheetmetal_beams_inch</span><span class="d">3/28/2023 12:26 PM</span><span class="ty">PNG File</span><span class="sz">3 KB</span></div>
  <div class="abs" style="left:716px;top:0;width:16px;height:340px;background:#f0f0f0"></div>
  <div class="abs" style="left:723px;top:270px;width:2px;height:70px;background:#8a8a8a;border-radius:1px"></div>
 </div>
</div>
</body></html>
